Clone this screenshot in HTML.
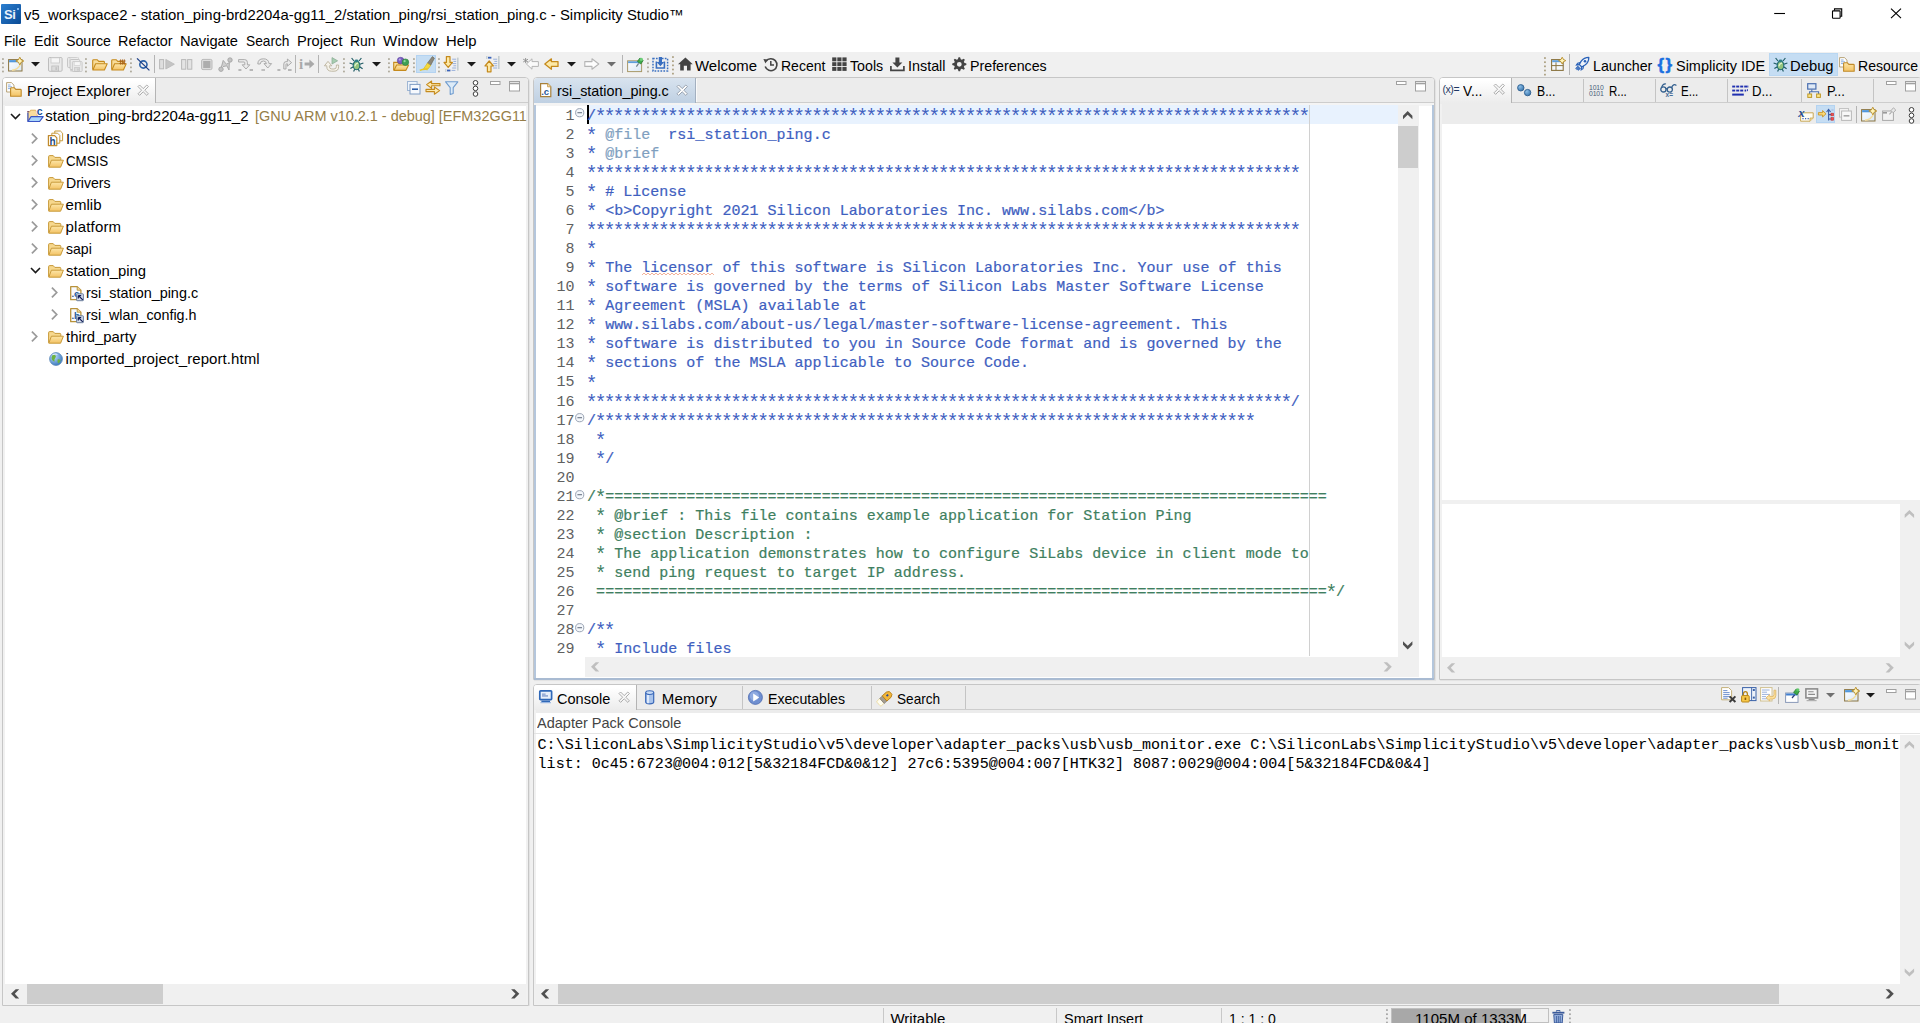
<!DOCTYPE html>
<html lang="en"><head><meta charset="utf-8"><title>Simplicity Studio</title>
<style>
html,body{margin:0;padding:0;}
body{width:1920px;height:1023px;overflow:hidden;background:#f0f0f0;position:relative;font-family:"Liberation Sans",sans-serif;font-size:15px;color:#000;}
div,span,svg{position:absolute;}
span{white-space:pre;line-height:20px;}
.m{font-family:"Liberation Mono",monospace;letter-spacing:0.02px;-webkit-text-stroke:0.22px;}
i{font-style:normal}
svg{overflow:visible}
</style></head>
<body>
<div style="left:0px;top:0px;width:1920px;height:52px;background:#fff;"></div>
<div style="left:2px;top:77px;width:525px;height:927px;border:1px solid #c6c6c6;border-radius:4px 4px 0 0;background:#fff;box-shadow:1px 1px 1px rgba(0,0,0,0.06);overflow:hidden;"><div style="left:0;top:0;width:100%;height:24px;background:#ececec;border-bottom:1px solid #cdcdcd;"></div><div style="left:0;top:25px;width:100%;height:2.5px;background:#ececec;"></div></div>
<div style="left:533px;top:77px;width:900px;height:601px;border:1px solid #c6c6c6;border-radius:4px 4px 0 0;background:#fff;box-shadow:1px 1px 1px rgba(0,0,0,0.06);overflow:hidden;"><div style="left:0;top:0;width:100%;height:24px;background:#ececec;border-bottom:1px solid #cdcdcd;"></div><div style="left:0;top:25px;width:100%;height:2.5px;background:#f4f4f4;"></div></div>
<div style="left:1439px;top:77px;width:481px;height:601px;border:1px solid #c6c6c6;border-radius:4px 4px 0 0;background:#fff;box-shadow:1px 1px 1px rgba(0,0,0,0.06);overflow:hidden;"><div style="left:0;top:0;width:100%;height:24px;background:#ececec;border-bottom:1px solid #cdcdcd;"></div><div style="left:0;top:25px;width:100%;height:2.5px;background:#ececec;"></div></div>
<div style="left:533px;top:684px;width:1387px;height:320px;border:1px solid #c6c6c6;border-radius:4px 4px 0 0;background:#fff;box-shadow:1px 1px 1px rgba(0,0,0,0.06);overflow:hidden;"><div style="left:0;top:0;width:100%;height:24px;background:#ececec;border-bottom:1px solid #cdcdcd;"></div><div style="left:0;top:25px;width:100%;height:2.5px;background:#ececec;"></div></div>
<div style="left:1769px;top:52.6px;width:69px;height:23.2px;background:#c5ddf3;border:1px solid #b9d7f2;box-sizing:border-box;"></div>
<div style="left:3px;top:105px;width:2px;height:900px;background:#f1f1f1;"></div>
<div style="left:525.5px;top:105px;width:2px;height:900px;background:#f1f1f1;"></div>
<div style="left:1440px;top:104px;width:2px;height:575px;background:#f1f1f1;"></div>
<div style="left:534px;top:710px;width:1.6px;height:295px;background:#f1f1f1;"></div>
<div style="left:3px;top:1003.9px;width:524px;height:1.3px;background:#f1f1f1;"></div>
<div style="left:534px;top:1003.9px;width:1386px;height:1.3px;background:#f1f1f1;"></div>
<div style="left:5px;top:983.5px;width:520.5px;height:20.5px;background:#f0f0f0;"></div>
<div style="left:26.8px;top:983.5px;width:136.7px;height:20.5px;background:#cdcdcd;"></div>
<svg style="left:5px;top:983.5px;" width="520.5" height="20.5" viewBox="0 0 520.5 20.5"><polygon points="6.00,9.85 10.70,14.55 14.20,14.55 9.80,9.85 14.20,5.15 10.70,5.15" fill="#505050"/><polygon points="514.30,9.85 509.60,14.55 506.10,14.55 510.50,9.85 506.10,5.15 509.60,5.15" fill="#505050"/></svg>
<div style="left:534px;top:78px;width:161px;height:25px;border-radius:4px 0 0 0;background:linear-gradient(#d8e3ef,#bfd0e2);border-right:1px solid #a3b0c0;"></div>
<div style="left:696px;top:79px;width:1px;height:23px;background:#fafafa;"></div>
<div style="left:534px;top:105px;width:2px;height:573px;background:#b4c6dc;"></div>
<div style="left:1432px;top:105px;width:2px;height:573px;background:#b4c6dc;"></div>
<div style="left:534px;top:677.7px;width:900px;height:2.1px;background:#a9bbd2;"></div>
<div style="left:589px;top:105px;width:809px;height:19px;background:#e8f2fe;"></div>
<div style="left:587px;top:105px;width:2px;height:19px;background:#000;"></div>
<div style="left:1309px;top:105px;width:1px;height:551px;background:#d0d0d0;"></div>
<div style="left:1398px;top:105px;width:20.6px;height:551.5px;background:#f0f0f0;"></div>
<div style="left:1398.3px;top:126px;width:20.0px;height:42px;background:#cdcdcd;"></div>
<svg style="left:1398px;top:105px;" width="20.6" height="551.5" viewBox="0 0 20.6 551.5"><polygon points="9.70,5.90 14.40,10.60 14.40,14.10 9.70,9.70 5.00,14.10 5.00,10.60" fill="#505050"/><polygon points="9.70,544.60 14.40,539.90 14.40,536.40 9.70,540.80 5.00,536.40 5.00,539.90" fill="#505050"/></svg>
<div style="left:585px;top:656.5px;width:813px;height:20.5px;background:#f0f0f0;"></div>
<svg style="left:585px;top:656.5px;" width="813" height="20.5" viewBox="0 0 813 20.5"><polygon points="6.00,9.85 10.70,14.55 14.20,14.55 9.80,9.85 14.20,5.15 10.70,5.15" fill="#bfbfbf"/><polygon points="806.80,9.85 802.10,14.55 798.60,14.55 803.00,9.85 798.60,5.15 802.10,5.15" fill="#bfbfbf"/></svg>
<div style="left:1398px;top:656.5px;width:20.6px;height:20.5px;background:#f0f0f0;"></div>
<div style="left:1441.5px;top:103px;width:479px;height:21px;background:#ececec;"></div>
<div style="left:1440px;top:500px;width:480px;height:4px;background:#f0f0f0;"></div>
<div style="left:1900px;top:504px;width:20px;height:152.5px;background:#f0f0f0;"></div>
<svg style="left:1900px;top:504px;" width="20" height="152.5" viewBox="0 0 20 152.5"><polygon points="9.40,5.90 14.10,10.60 14.10,14.10 9.40,9.70 4.70,14.10 4.70,10.60" fill="#bfbfbf"/><polygon points="9.40,145.60 14.10,140.90 14.10,137.40 9.40,141.80 4.70,137.40 4.70,140.90" fill="#bfbfbf"/></svg>
<div style="left:1441px;top:656.5px;width:459px;height:22.5px;background:#f0f0f0;"></div>
<svg style="left:1441px;top:656.5px;" width="459" height="22.5" viewBox="0 0 459 22.5"><polygon points="6.00,10.85 10.70,15.55 14.20,15.55 9.80,10.85 14.20,6.15 10.70,6.15" fill="#bfbfbf"/><polygon points="452.80,10.85 448.10,15.55 444.60,15.55 449.00,10.85 444.60,6.15 448.10,6.15" fill="#bfbfbf"/></svg>
<div style="left:1900px;top:656px;width:20px;height:23px;background:#f0f0f0;"></div>
<div style="left:1440px;top:78px;width:71px;height:25px;border-radius:3px 0 0 0;background:linear-gradient(#ffffff 10%,#ececec);border-right:1px solid #b4b4b4;"></div>
<div style="left:1583px;top:79px;width:1px;height:23px;background:#c4c4c4;"></div>
<div style="left:1655px;top:79px;width:1px;height:23px;background:#c4c4c4;"></div>
<div style="left:1727px;top:79px;width:1px;height:23px;background:#c4c4c4;"></div>
<div style="left:1801px;top:79px;width:1px;height:23px;background:#c4c4c4;"></div>
<div style="left:1873px;top:79px;width:1px;height:23px;background:#c4c4c4;"></div>
<div style="left:3px;top:78px;width:152px;height:25px;border-radius:3px 0 0 0;background:linear-gradient(#ffffff 10%,#ececec);border-right:1px solid #b4b4b4;"></div>
<div style="left:534px;top:685px;width:102px;height:25px;border-radius:3px 0 0 0;background:linear-gradient(#ffffff 10%,#ececec);border-right:1px solid #b4b4b4;"></div>
<div style="left:742px;top:686px;width:1px;height:23px;background:#c4c4c4;"></div>
<div style="left:871px;top:686px;width:1px;height:23px;background:#c4c4c4;"></div>
<div style="left:965px;top:686px;width:1px;height:23px;background:#c4c4c4;"></div>
<div style="left:534px;top:733px;width:1386px;height:1px;background:#e4e4e4;"></div>
<div style="left:1900px;top:735px;width:20px;height:248.5px;background:#f0f0f0;"></div>
<svg style="left:1900px;top:735px;" width="20" height="248.5" viewBox="0 0 20 248.5"><polygon points="9.40,5.90 14.10,10.60 14.10,14.10 9.40,9.70 4.70,14.10 4.70,10.60" fill="#bfbfbf"/><polygon points="9.40,241.60 14.10,236.90 14.10,233.40 9.40,237.80 4.70,233.40 4.70,236.90" fill="#bfbfbf"/></svg>
<div style="left:535px;top:983.5px;width:1365px;height:20.5px;background:#f0f0f0;"></div>
<div style="left:557.5px;top:983.5px;width:1221.9px;height:20.5px;background:#cdcdcd;"></div>
<svg style="left:535px;top:983.5px;" width="1365" height="20.5" viewBox="0 0 1365 20.5"><polygon points="6.00,9.85 10.70,14.55 14.20,14.55 9.80,9.85 14.20,5.15 10.70,5.15" fill="#505050"/><polygon points="1358.80,9.85 1354.10,14.55 1350.60,14.55 1355.00,9.85 1350.60,5.15 1354.10,5.15" fill="#505050"/></svg>
<div style="left:1900px;top:983.5px;width:20px;height:20.5px;background:#f0f0f0;"></div>
<div style="left:0px;top:1006px;width:1920px;height:17px;background:#f0f0f0;"></div>
<div style="left:883px;top:1008px;width:1px;height:15px;background:#c8c8c8;"></div>
<div style="left:1056px;top:1008px;width:1px;height:15px;background:#c8c8c8;"></div>
<div style="left:1221px;top:1008px;width:1px;height:15px;background:#c8c8c8;"></div>
<div style="left:1391px;top:1008px;width:158px;height:15px;background:#f0f0f0;border:1px solid #c0c0c0;box-sizing:border-box;"></div>
<div style="left:1392px;top:1009px;width:129px;height:14px;background:#a8a8a8;"></div>
<svg width="0" height="0" style="left:0;top:0"><defs>
<linearGradient id="gSi" x1="0" y1="0" x2="1" y2="1"><stop offset="0" stop-color="#2b7fd0"/><stop offset="1" stop-color="#0a4a94"/></linearGradient>
<linearGradient id="gFold" x1="0" y1="0" x2="0" y2="1"><stop offset="0" stop-color="#fde6a8"/><stop offset="1" stop-color="#f3c264"/></linearGradient>
<linearGradient id="gWin" x1="0" y1="0" x2="1" y2="1"><stop offset="0" stop-color="#ffffff"/><stop offset="1" stop-color="#d9e8f6"/></linearGradient>
<linearGradient id="gBlue" x1="0" y1="0" x2="0" y2="1"><stop offset="0" stop-color="#9cc0e8"/><stop offset="1" stop-color="#3f78b8"/></linearGradient>
<radialGradient id="gBall" cx="0.35" cy="0.3" r="0.8"><stop offset="0" stop-color="#8fc0e8"/><stop offset="1" stop-color="#2f6ea8"/></radialGradient>
<radialGradient id="gGlobe" cx="0.35" cy="0.3" r="0.8"><stop offset="0" stop-color="#bfe0ff"/><stop offset="1" stop-color="#2f6fb8"/></radialGradient>
</defs></svg>
<svg style="left:1px;top:4px;" width="20" height="20" viewBox="0 0 20 20"><rect x="0" y="0" width="20" height="20" fill="url(#gSi)" rx="1" /><text x="3" y="15" font-family="Liberation Sans" font-weight="bold" font-size="13" fill="#e9f2fb" letter-spacing="-0.5">Si</text><rect x="16" y="4" width="2" height="2" fill="#7fb6ee" /></svg>
<svg style="left:1770px;top:4px;" width="20" height="20" viewBox="0 0 20 20"><path d="M4.2 9.5 H15" fill="none" stroke="#000" stroke-width="1.1" /></svg>
<svg style="left:1828px;top:4px;" width="20" height="20" viewBox="0 0 20 20"><path d="M6.5 6.5 V4.9 H13.7 V12.2 H12.1" fill="none" stroke="#000" stroke-width="1.1" /><rect x="4.5" y="6.9" width="7.6" height="7.4" fill="none" stroke="#000" stroke-width="1.1" rx="0.6" /></svg>
<svg style="left:1886px;top:4px;" width="20" height="20" viewBox="0 0 20 20"><path d="M5 4.6 L15 14.2 M15 4.6 L5 14.2" fill="none" stroke="#000" stroke-width="1.15" /></svg>
<svg style="left:9.5px;top:113px;" width="11" height="7" viewBox="0 0 11 7"><path d="M1 1 L5.5 5.5 L10 1" fill="none" stroke="#1a1a1a" stroke-width="1.6" /></svg>
<svg style="left:27px;top:108px;" width="17" height="15" viewBox="0 0 17 15"><path d="M1 12.8 V3.8 H2.8 L3.6 2.2 H8.6 L9.4 3.8 H10.2 V8.6 H4 Z" fill="#f9dd9c" stroke="#dcae52" stroke-width="0.9" stroke-linejoin="round"/><path d="M0.9 4.4 V13.5" fill="none" stroke="#3a54c4" stroke-width="1.2" /><path d="M0.2 3.6 H2.2" fill="none" stroke="#7a4a6a" stroke-width="1" /><path d="M1 13.5 L4 8.7 H16.2 L12.6 13.5 Z" fill="#a9d6fb" stroke="#3a54c4" stroke-width="1.2" stroke-linejoin="round"/><text x="9.8" y="6.7" font-family="Liberation Sans" font-weight="bold" font-size="10.5" fill="#1a5596" stroke="#ffffff" stroke-width="1.2" paint-order="stroke">c</text></svg>
<svg style="left:31.4px;top:132.6px;" width="7" height="11" viewBox="0 0 7 11"><path d="M0.9 0.7 L5.7 5.5 L0.9 10.3" fill="none" stroke="#9a9a9a" stroke-width="1.75" /></svg>
<svg style="left:31.4px;top:154.6px;" width="7" height="11" viewBox="0 0 7 11"><path d="M0.9 0.7 L5.7 5.5 L0.9 10.3" fill="none" stroke="#9a9a9a" stroke-width="1.75" /></svg>
<svg style="left:31.4px;top:176.6px;" width="7" height="11" viewBox="0 0 7 11"><path d="M0.9 0.7 L5.7 5.5 L0.9 10.3" fill="none" stroke="#9a9a9a" stroke-width="1.75" /></svg>
<svg style="left:31.4px;top:198.6px;" width="7" height="11" viewBox="0 0 7 11"><path d="M0.9 0.7 L5.7 5.5 L0.9 10.3" fill="none" stroke="#9a9a9a" stroke-width="1.75" /></svg>
<svg style="left:31.4px;top:220.6px;" width="7" height="11" viewBox="0 0 7 11"><path d="M0.9 0.7 L5.7 5.5 L0.9 10.3" fill="none" stroke="#9a9a9a" stroke-width="1.75" /></svg>
<svg style="left:31.4px;top:242.6px;" width="7" height="11" viewBox="0 0 7 11"><path d="M0.9 0.7 L5.7 5.5 L0.9 10.3" fill="none" stroke="#9a9a9a" stroke-width="1.75" /></svg>
<svg style="left:29.5px;top:267px;" width="11" height="7" viewBox="0 0 11 7"><path d="M1 1 L5.5 5.5 L10 1" fill="none" stroke="#1a1a1a" stroke-width="1.6" /></svg>
<svg style="left:51.4px;top:286.6px;" width="7" height="11" viewBox="0 0 7 11"><path d="M0.9 0.7 L5.7 5.5 L0.9 10.3" fill="none" stroke="#9a9a9a" stroke-width="1.75" /></svg>
<svg style="left:51.4px;top:308.6px;" width="7" height="11" viewBox="0 0 7 11"><path d="M0.9 0.7 L5.7 5.5 L0.9 10.3" fill="none" stroke="#9a9a9a" stroke-width="1.75" /></svg>
<svg style="left:31.4px;top:330.6px;" width="7" height="11" viewBox="0 0 7 11"><path d="M0.9 0.7 L5.7 5.5 L0.9 10.3" fill="none" stroke="#9a9a9a" stroke-width="1.75" /></svg>
<svg style="left:47px;top:130px;" width="17" height="17" viewBox="0 0 17 17"><path d="M7.8 1 H13.4 L15.6 3.2 V10.8 H7.8 Z" fill="#fbfcfe" stroke="#c89a3a" stroke-width="1" stroke-linejoin="round"/><path d="M4.8 3.2 H10.6 L12.8 5.4 V13.2 H4.8 Z" fill="#fbfcfe" stroke="#c89a3a" stroke-width="1" stroke-linejoin="round"/><path d="M1.4 5.6 H7.6 L9.8 7.8 V15.6 H1.4 Z" fill="#ffffff" stroke="#c08a2e" stroke-width="1.2" stroke-linejoin="round"/><text x="2.4" y="14.6" font-family="Liberation Sans" font-weight="bold" font-size="10" fill="#1f4a7e">h</text></svg>
<svg style="left:47.5px;top:155.1px;" width="16" height="13" viewBox="0 0 16 13"><path d="M0.6 11.8 V1.6 Q0.6 0.6 1.6 0.6 H5.2 L6.8 2.4 H12 Q12.8 2.4 12.8 3.4 V5" fill="#f7d88e" stroke="#c89a3a" stroke-width="1" /><path d="M0.8 12.2 L3.4 5.2 H15.4 L12.6 12.2 Z" fill="url(#gFold)" stroke="#c89a3a" stroke-width="1" stroke-linejoin="round"/></svg>
<svg style="left:47.5px;top:177.1px;" width="16" height="13" viewBox="0 0 16 13"><path d="M0.6 11.8 V1.6 Q0.6 0.6 1.6 0.6 H5.2 L6.8 2.4 H12 Q12.8 2.4 12.8 3.4 V5" fill="#f7d88e" stroke="#c89a3a" stroke-width="1" /><path d="M0.8 12.2 L3.4 5.2 H15.4 L12.6 12.2 Z" fill="url(#gFold)" stroke="#c89a3a" stroke-width="1" stroke-linejoin="round"/></svg>
<svg style="left:47.5px;top:199.1px;" width="16" height="13" viewBox="0 0 16 13"><path d="M0.6 11.8 V1.6 Q0.6 0.6 1.6 0.6 H5.2 L6.8 2.4 H12 Q12.8 2.4 12.8 3.4 V5" fill="#f7d88e" stroke="#c89a3a" stroke-width="1" /><path d="M0.8 12.2 L3.4 5.2 H15.4 L12.6 12.2 Z" fill="url(#gFold)" stroke="#c89a3a" stroke-width="1" stroke-linejoin="round"/></svg>
<svg style="left:47.5px;top:221.1px;" width="16" height="13" viewBox="0 0 16 13"><path d="M0.6 11.8 V1.6 Q0.6 0.6 1.6 0.6 H5.2 L6.8 2.4 H12 Q12.8 2.4 12.8 3.4 V5" fill="#f7d88e" stroke="#c89a3a" stroke-width="1" /><path d="M0.8 12.2 L3.4 5.2 H15.4 L12.6 12.2 Z" fill="url(#gFold)" stroke="#c89a3a" stroke-width="1" stroke-linejoin="round"/></svg>
<svg style="left:47.5px;top:243.1px;" width="16" height="13" viewBox="0 0 16 13"><path d="M0.6 11.8 V1.6 Q0.6 0.6 1.6 0.6 H5.2 L6.8 2.4 H12 Q12.8 2.4 12.8 3.4 V5" fill="#f7d88e" stroke="#c89a3a" stroke-width="1" /><path d="M0.8 12.2 L3.4 5.2 H15.4 L12.6 12.2 Z" fill="url(#gFold)" stroke="#c89a3a" stroke-width="1" stroke-linejoin="round"/></svg>
<svg style="left:47.5px;top:265.1px;" width="16" height="13" viewBox="0 0 16 13"><path d="M0.6 11.8 V1.6 Q0.6 0.6 1.6 0.6 H5.2 L6.8 2.4 H12 Q12.8 2.4 12.8 3.4 V5" fill="#f7d88e" stroke="#c89a3a" stroke-width="1" /><path d="M0.8 12.2 L3.4 5.2 H15.4 L12.6 12.2 Z" fill="url(#gFold)" stroke="#c89a3a" stroke-width="1" stroke-linejoin="round"/></svg>
<svg style="left:47.5px;top:331.1px;" width="16" height="13" viewBox="0 0 16 13"><path d="M0.6 11.8 V1.6 Q0.6 0.6 1.6 0.6 H5.2 L6.8 2.4 H12 Q12.8 2.4 12.8 3.4 V5" fill="#f7d88e" stroke="#c89a3a" stroke-width="1" /><path d="M0.8 12.2 L3.4 5.2 H15.4 L12.6 12.2 Z" fill="url(#gFold)" stroke="#c89a3a" stroke-width="1" stroke-linejoin="round"/></svg>
<svg style="left:69.5px;top:285.5px;" width="15" height="16" viewBox="0 0 15 16"><path d="M0.7 0.7 H7.2 L10.9 4.2 V13.7 H0.7 Z" fill="#f7faff" stroke="#b8923a" stroke-width="1.3" stroke-linejoin="round"/><path d="M7.2 0.7 V4.2 H10.9" fill="#f3dca0" stroke="#b8923a" stroke-width="0.9" /><text x="1.4" y="11" font-family="Liberation Sans" font-weight="bold" font-size="9.5" fill="#1f5a9a">.c</text><rect x="6.6" y="7.8" width="6.8" height="6.9" fill="#d3dcea" stroke="#5f7494" stroke-width="0.9" rx="0.6" /><path d="M8.4 9.6 L12.8 13.9 M8.3 9.5 V12.4 M8.3 9.5 H11.2" fill="none" stroke="#101a55" stroke-width="1.25" /></svg>
<svg style="left:69.5px;top:307.5px;" width="15" height="16" viewBox="0 0 15 16"><path d="M0.7 0.7 H7.2 L10.9 4.2 V13.7 H0.7 Z" fill="#f7faff" stroke="#b8923a" stroke-width="1.3" stroke-linejoin="round"/><path d="M7.2 0.7 V4.2 H10.9" fill="#f3dca0" stroke="#b8923a" stroke-width="0.9" /><text x="1.4" y="11" font-family="Liberation Sans" font-weight="bold" font-size="9.5" fill="#1f5a9a">.h</text><rect x="6.6" y="7.8" width="6.8" height="6.9" fill="#d3dcea" stroke="#5f7494" stroke-width="0.9" rx="0.6" /><path d="M8.4 9.6 L12.8 13.9 M8.3 9.5 V12.4 M8.3 9.5 H11.2" fill="none" stroke="#101a55" stroke-width="1.25" /></svg>
<svg style="left:48.5px;top:352px;" width="14" height="14" viewBox="0 0 14 14"><circle cx="7" cy="7" r="6.4" fill="url(#gGlobe)" stroke="#5b86b8" stroke-width="0.8"/><path d="M3.2 3.4 Q5 2.2 6.4 3.2 Q7.6 4.6 6.2 6 Q4.8 7.6 5.6 9.4 Q4.2 9.6 3.2 8 Q2 5.6 3.2 3.4 Z M8.6 7.4 Q10.6 6.8 11.6 8.6 Q11 10.8 9.2 11.4 Q8.2 9.6 8.6 7.4 Z" fill="#6db33f" /><path d="M3.6 2.8 Q6 1.4 8.4 2.4" fill="none" stroke="#ffffff" stroke-width="1.1" opacity="0.7"/></svg>
<svg style="left:1.5px;top:58px;" width="2" height="18" viewBox="0 0 2 18"><rect x="0.1" y="0.2" width="1.7" height="1.7" fill="#aaa596" /><rect x="0.1" y="4.3500000000000005" width="1.7" height="1.7" fill="#aaa596" /><rect x="0.1" y="8.5" width="1.7" height="1.7" fill="#aaa596" /><rect x="0.1" y="12.65" width="1.7" height="1.7" fill="#aaa596" /></svg>
<svg style="left:7.8px;top:56.6px;" width="16" height="15" viewBox="0 0 16 15"><rect x="0.6" y="2.6" width="13.4" height="11.4" fill="url(#gWin)" stroke="#8a7440" stroke-width="1" /><rect x="1.1" y="3.1" width="12.4" height="2.2" fill="#4f97dd" /><path d="M4 13.2 Q10 13 12.6 7" fill="none" stroke="#f3dc9a" stroke-width="1.4" /><path d="M11.8 0.2 L13.2 2.8 L15.8 4 L13.2 5.2 L11.8 7.8 L10.4 5.2 L7.8 4 L10.4 2.8 Z" fill="#fff4b8" stroke="#b58a26" stroke-width="0.9" /></svg>
<svg style="left:30.5px;top:62px;" width="9" height="5" viewBox="0 0 9 5"><path d="M0 0 H9 L4.5 4.6 Z" fill="#1a1a1a" /></svg>
<svg style="left:48px;top:57.4px;" width="15" height="15" viewBox="0 0 15 15"><g transform="translate(0 0)"><rect x="0.5" y="0.5" width="13.6" height="13.8" fill="#e9e9e9" stroke="#bdbdbd" stroke-width="1" rx="1.2" /><rect x="3" y="0.8" width="8.4" height="5.2" fill="#f6f6f6" stroke="#c9c9c9" stroke-width="0.8" /><rect x="3.8" y="9" width="6.8" height="5" fill="#dcdcdc" stroke="#bdbdbd" stroke-width="0.8" /><rect x="7.4" y="10.2" width="1.8" height="2.8" fill="#c4c4c4" /></g></svg>
<svg style="left:67px;top:57.2px;" width="16" height="15" viewBox="0 0 16 15"><g opacity="0.8"><g transform="translate(0 0)"><rect x="0.5" y="0.5" width="9.6" height="10" fill="#e9e9e9" stroke="#bdbdbd" stroke-width="1" rx="1.2" /><rect x="3" y="0.8" width="8.4" height="5.2" fill="#f6f6f6" stroke="#c9c9c9" stroke-width="0.8" /><rect x="3.8" y="9" width="6.8" height="5" fill="#dcdcdc" stroke="#bdbdbd" stroke-width="0.8" /><rect x="7.4" y="10.2" width="1.8" height="2.8" fill="#c4c4c4" /></g></g><g transform="translate(2.6 2)"><rect x="0.5" y="0.5" width="9.6" height="10" fill="#ececec" stroke="#c4c4c4" stroke-width="1" rx="1" /></g><g transform="translate(5 4.2) scale(0.72)"><g transform="translate(0 0)"><rect x="0.5" y="0.5" width="13.6" height="13.8" fill="#e9e9e9" stroke="#bdbdbd" stroke-width="1" rx="1.2" /><rect x="3" y="0.8" width="8.4" height="5.2" fill="#f6f6f6" stroke="#c9c9c9" stroke-width="0.8" /><rect x="3.8" y="9" width="6.8" height="5" fill="#dcdcdc" stroke="#bdbdbd" stroke-width="0.8" /><rect x="7.4" y="10.2" width="1.8" height="2.8" fill="#c4c4c4" /></g></g></svg>
<svg style="left:85.3px;top:58px;" width="2" height="18" viewBox="0 0 2 18"><rect x="0.1" y="0.2" width="1.7" height="1.7" fill="#aaa596" /><rect x="0.1" y="4.3500000000000005" width="1.7" height="1.7" fill="#aaa596" /><rect x="0.1" y="8.5" width="1.7" height="1.7" fill="#aaa596" /><rect x="0.1" y="12.65" width="1.7" height="1.7" fill="#aaa596" /></svg>
<svg style="left:91.6px;top:58.6px;" width="16" height="12" viewBox="0 0 16 12"><path d="M0.7 10.6 V1.6 Q0.7 0.7 1.7 0.7 H5.2 L6.8 2.4 H11.6 Q12.4 2.4 12.4 3.2 V4.6" fill="#f8dc98" stroke="#c58a1c" stroke-width="1.1" /><path d="M0.9 11 L3.6 4.8 H15.2 L12.4 11 Z" fill="url(#gFold)" stroke="#c58a1c" stroke-width="1.1" stroke-linejoin="round"/></svg>
<svg style="left:111.2px;top:58.6px;" width="16" height="12" viewBox="0 0 16 12"><path d="M0.7 10.6 V1.6 Q0.7 0.7 1.7 0.7 H5.2 L6.8 2.4 H11.6 Q12.4 2.4 12.4 3.2 V4.6" fill="#f8dc98" stroke="#c58a1c" stroke-width="1.1" /><path d="M0.9 11 L3.6 4.8 H15.2 L12.4 11 Z" fill="url(#gFold)" stroke="#c58a1c" stroke-width="1.1" stroke-linejoin="round"/><path d="M8.4 2 H14.6 M8.4 4.4 H14.6 M9.6 0.4 V5.6 M11.6 0.4 V5.6 M13.4 0.4 V5.6" fill="none" stroke="#a8621a" stroke-width="0.9" /></svg>
<svg style="left:129.6px;top:58px;" width="2" height="18" viewBox="0 0 2 18"><rect x="0.1" y="0.2" width="1.7" height="1.7" fill="#aaa596" /><rect x="0.1" y="4.3500000000000005" width="1.7" height="1.7" fill="#aaa596" /><rect x="0.1" y="8.5" width="1.7" height="1.7" fill="#aaa596" /><rect x="0.1" y="12.65" width="1.7" height="1.7" fill="#aaa596" /></svg>
<svg style="left:136px;top:57px;" width="15" height="15" viewBox="0 0 15 15"><circle cx="7.4" cy="7.5" r="3.6" fill="none" stroke="#2c62a8" stroke-width="1.6"/><path d="M1 1.4 L13.4 13.4" fill="none" stroke="#1d3f86" stroke-width="1.3" /></svg>
<div style="left:154px;top:55px;width:1px;height:18px;background:#b4b4b4;"></div>
<svg style="left:159px;top:59px;" width="17" height="11" viewBox="0 0 17 11"><rect x="0.6" y="0.6" width="4" height="9.2" fill="#dedede" stroke="#b9b9b9" stroke-width="1" /><path d="M6.8 0.4 L15.4 5.2 L6.8 10 Z" fill="#c4c4c4" stroke="#b9b9b9" stroke-width="0.8" /></svg>
<svg style="left:180.6px;top:59px;" width="12" height="11" viewBox="0 0 12 11"><rect x="0.6" y="0.6" width="4.2" height="9.6" fill="#e4e4e4" stroke="#b9b9b9" stroke-width="1" /><rect x="6.6" y="0.6" width="4.2" height="9.6" fill="#e4e4e4" stroke="#b9b9b9" stroke-width="1" /></svg>
<svg style="left:200.6px;top:59px;" width="12" height="11" viewBox="0 0 12 11"><rect x="0.6" y="0.4" width="10.4" height="10.2" fill="#dcdcdc" stroke="#b9b9b9" stroke-width="1" rx="1.4" /><rect x="2.2" y="2" width="7.2" height="7" fill="#adadad" /></svg>
<svg style="left:217.6px;top:57px;" width="16" height="16" viewBox="0 0 16 16"><circle cx="3" cy="12.2" r="2.2" fill="#c4c4c4" stroke="#a4a4a4" stroke-width="0.9"/><circle cx="12" cy="3" r="2.2" fill="#c4c4c4" stroke="#a4a4a4" stroke-width="0.9"/><path d="M3.4 10 L5.2 3.4 L8.4 7.2 L11.4 5.6 L11 13 L8.8 8.8 L5 9.6" fill="#cfcfcf" stroke="#a4a4a4" stroke-width="0.9" /></svg>
<svg style="left:238px;top:58px;" width="16" height="13" viewBox="0 0 16 13"><path d="M0.6 1.6 H6.6 Q9.4 1.6 9.4 4.4 V6.8 H11.8 L8 11 L4.2 6.8 H6.8 V4.8 Q6.8 4 6 4 H0.6 Z" fill="#ececec" stroke="#a4a4a4" stroke-width="0.9" stroke-linejoin="round"/><path d="M0.4 12 H3.4 M11.6 12 H15" fill="none" stroke="#a4a4a4" stroke-width="1.3" /></svg>
<svg style="left:257px;top:58px;" width="17" height="13" viewBox="0 0 17 13"><path d="M0.8 6 Q0.8 0.8 6.4 0.8 Q11.6 0.8 12 5.6 H14.6 L10.8 10 L7 5.6 H9.4 Q9 3 6.4 3 Q3.4 3 3.2 6 Z" fill="#eaeaea" stroke="#a4a4a4" stroke-width="0.9" /><path d="M4.4 12 H8" fill="none" stroke="#a4a4a4" stroke-width="1.3" /></svg>
<svg style="left:276.6px;top:58px;" width="16" height="13" viewBox="0 0 16 13"><path d="M6.8 11 V6 Q6.8 3.6 9.2 3.6 H10.4 V1 L14.6 4.6 L10.4 8.2 V5.8 H9.6 Q9 5.8 9 6.6 V11 Z" fill="#eaeaea" stroke="#a4a4a4" stroke-width="0.9" /><path d="M0.4 12 H3.4 M11 12 H14.6" fill="none" stroke="#a4a4a4" stroke-width="1.3" /></svg>
<div style="left:295px;top:55px;width:1px;height:18px;background:#b4b4b4;"></div>
<svg style="left:299px;top:57.6px;" width="16" height="12" viewBox="0 0 16 12"><text x="0" y="11" font-family="Liberation Serif" font-weight="bold" font-size="15" fill="#a9a9a9">i</text><path d="M5.6 4.6 H10.4 V1.6 L15.4 6 L10.4 10.4 V7.4 H5.6 Z" fill="#a9a9a9" /></svg>
<div style="left:318px;top:55px;width:1px;height:18px;background:#b4b4b4;"></div>
<svg style="left:324px;top:57px;" width="16" height="15" viewBox="0 0 16 15"><path d="M8 0.6 L13.6 3.8 L8 7 Z" fill="#a6cdb0" stroke="#8fae98" stroke-width="0.8" stroke-linejoin="round"/><path d="M4 4.4 L7.8 8.8 H5.4 V9.6 Q5.4 12 7.8 12 H10 Q12.4 12 12.4 9.6 V8 H14.6 V9.8 Q14.6 14.2 10 14.2 H7.6 Q2.8 14.2 2.8 9.6 V8.8 H0.4 Z" fill="#f6f3ea" stroke="#b9b19c" stroke-width="0.9" stroke-linejoin="round"/></svg>
<svg style="left:342.8px;top:58px;" width="2" height="18" viewBox="0 0 2 18"><rect x="0.1" y="0.2" width="1.7" height="1.7" fill="#aaa596" /><rect x="0.1" y="4.3500000000000005" width="1.7" height="1.7" fill="#aaa596" /><rect x="0.1" y="8.5" width="1.7" height="1.7" fill="#aaa596" /><rect x="0.1" y="12.65" width="1.7" height="1.7" fill="#aaa596" /></svg>
<svg style="left:349px;top:57px;" width="15" height="15" viewBox="0 0 15 15"><path d="M5 4 L2.6 1 M10 4 L12.4 1 M4.2 7.2 L0.6 6 M10.8 7.2 L14.4 6 M4.4 9.8 L1.4 11.6 M10.6 9.8 L13.6 11.8 M5.8 12 L4.6 14.6 M9.2 12 L10.4 14.6" fill="none" stroke="#1e5a63" stroke-width="1.15" /><ellipse cx="7.5" cy="8.4" rx="3.3" ry="4.3" fill="#93c47d" stroke="#1e6a74" stroke-width="1.1"/><ellipse cx="7.5" cy="4" rx="2" ry="1.4" fill="#2f7f86"/><path d="M5.8 9.4 Q6.6 6.4 9 6.2" fill="none" stroke="#dff2d0" stroke-width="1.2" /></svg>
<svg style="left:371.6px;top:62px;" width="9" height="5" viewBox="0 0 9 5"><path d="M0 0 H9 L4.5 4.6 Z" fill="#1a1a1a" /></svg>
<svg style="left:387.8px;top:58px;" width="2" height="18" viewBox="0 0 2 18"><rect x="0.1" y="0.2" width="1.7" height="1.7" fill="#aaa596" /><rect x="0.1" y="4.3500000000000005" width="1.7" height="1.7" fill="#aaa596" /><rect x="0.1" y="8.5" width="1.7" height="1.7" fill="#aaa596" /><rect x="0.1" y="12.65" width="1.7" height="1.7" fill="#aaa596" /></svg>
<svg style="left:393px;top:57px;" width="17" height="14" viewBox="0 0 17 14"><path d="M0.7 13 V5.4 H4.6 L6 6.8 H9" fill="#f8dc98" stroke="#c58a1c" stroke-width="1.1" /><path d="M0.9 13.4 L3.6 8 H15.6 L12.8 13.4 Z" fill="url(#gFold)" stroke="#c58a1c" stroke-width="1.1" stroke-linejoin="round"/><circle cx="7.6" cy="3.6" r="3.3" fill="#7a5fc0" stroke="#5a3fa0" stroke-width="0.6"/><circle cx="12.4" cy="5.2" r="3.3" fill="#3fa055" stroke="#2a7a3c" stroke-width="0.6"/><circle cx="6.8" cy="2.6" r="1.1" fill="#b9a6ea"/><circle cx="11.6" cy="4.2" r="1.1" fill="#8fd89f"/></svg>
<svg style="left:413.2px;top:58px;" width="2" height="18" viewBox="0 0 2 18"><rect x="0.1" y="0.2" width="1.7" height="1.7" fill="#aaa596" /><rect x="0.1" y="4.3500000000000005" width="1.7" height="1.7" fill="#aaa596" /><rect x="0.1" y="8.5" width="1.7" height="1.7" fill="#aaa596" /><rect x="0.1" y="12.65" width="1.7" height="1.7" fill="#aaa596" /></svg>
<div style="left:416px;top:54.5px;width:20px;height:18.5px;background:#c5ddf3;border:1px solid #b4d3f1;box-sizing:border-box;"></div>
<svg style="left:419px;top:56px;" width="16" height="16" viewBox="0 0 16 16"><path d="M13.4 0.6 L15.4 2.2 L11.6 9.4 L8.4 7.2 Z" fill="#8c8778" stroke="#6f6a5c" stroke-width="0.7" /><path d="M8.4 7.2 L11.6 9.4 L9.4 12.6 L4.2 13.4 Z" fill="#f4d83a" stroke="#d8b820" stroke-width="0.7" /><path d="M0.8 14.4 Q4 12.8 8.8 13.4" fill="none" stroke="#e8c828" stroke-width="1.6" /></svg>
<svg style="left:438.4px;top:58px;" width="2" height="18" viewBox="0 0 2 18"><rect x="0.1" y="0.2" width="1.7" height="1.7" fill="#aaa596" /><rect x="0.1" y="4.3500000000000005" width="1.7" height="1.7" fill="#aaa596" /><rect x="0.1" y="8.5" width="1.7" height="1.7" fill="#aaa596" /><rect x="0.1" y="12.65" width="1.7" height="1.7" fill="#aaa596" /></svg>
<svg style="left:444.4px;top:55.8px;" width="15" height="17" viewBox="0 0 15 17"><path d="M8.2 3.2 H12.2" fill="none" stroke="#8fa8d8" stroke-width="0.9" /><path d="M9.399999999999999 5.4 H12.2" fill="none" stroke="#8fa8d8" stroke-width="0.9" /><path d="M8.2 7.6000000000000005 H12.2" fill="none" stroke="#8fa8d8" stroke-width="0.9" /><path d="M9.399999999999999 9.8 H12.2" fill="none" stroke="#8fa8d8" stroke-width="0.9" /><path d="M8.2 12.0 H12.2" fill="none" stroke="#8fa8d8" stroke-width="0.9" /><rect x="13" y="1.6" width="1.6" height="13" fill="#c3ccd0" /><path d="M2.4 0.6 H6 V6.4 H8.4 L4.2 11.4 L0 6.4 H2.4 Z" fill="#fde9a6" stroke="#c58a1c" stroke-width="1.2" stroke-linejoin="round"/><rect x="1.2" y="13" width="1.2" height="3" fill="#c3ccd0" /><rect x="3" y="13.6" width="3.4" height="1.8" fill="#3a62b8" /><path d="M7.6 14.4 H11.4" fill="none" stroke="#8fa8d8" stroke-width="0.9" /></svg>
<svg style="left:467px;top:62px;" width="9" height="5" viewBox="0 0 9 5"><path d="M0 0 H9 L4.5 4.6 Z" fill="#1a1a1a" /></svg>
<svg style="left:484.6px;top:55.8px;" width="15" height="17" viewBox="0 0 15 17"><path d="M8.2 3.2 H12.2" fill="none" stroke="#8fa8d8" stroke-width="0.9" /><path d="M9.399999999999999 5.4 H12.2" fill="none" stroke="#8fa8d8" stroke-width="0.9" /><path d="M8.2 7.6000000000000005 H12.2" fill="none" stroke="#8fa8d8" stroke-width="0.9" /><path d="M9.399999999999999 9.8 H12.2" fill="none" stroke="#8fa8d8" stroke-width="0.9" /><path d="M8.2 12.0 H12.2" fill="none" stroke="#8fa8d8" stroke-width="0.9" /><rect x="13" y="0" width="1.6" height="13" fill="#c3ccd0" /><path d="M2.4 15.8 H6 V10 H8.4 L4.2 5 L0 10 H2.4 Z" fill="#fde9a6" stroke="#c58a1c" stroke-width="1.2" stroke-linejoin="round"/><rect x="1.2" y="0" width="1.2" height="3" fill="#c3ccd0" /><rect x="3" y="0.8" width="3.4" height="1.8" fill="#3a62b8" /></svg>
<svg style="left:507px;top:62px;" width="9" height="5" viewBox="0 0 9 5"><path d="M0 0 H9 L4.5 4.6 Z" fill="#1a1a1a" /></svg>
<svg style="left:523px;top:57.6px;" width="17" height="13" viewBox="0 0 17 13"><path d="M15.4 3.6 H9 V0.8 L3.4 6 L9 11.2 V8.4 H15.4 Z" fill="#fafafa" stroke="#b4b4b4" stroke-width="1" stroke-linejoin="round"/><path d="M2.6 0 V5.2 M0.2 1.2 L5 4 M5 1.2 L0.2 4" fill="none" stroke="#8c8c8c" stroke-width="0.9" /></svg>
<svg style="left:544px;top:57.8px;" width="15" height="13" viewBox="0 0 15 13"><path d="M14 3.6 H7.4 V0.8 L0.8 6 L7.4 11.2 V8.4 H14 Z" fill="#fde9a6" stroke="#c58a1c" stroke-width="1.3" stroke-linejoin="round"/></svg>
<svg style="left:566.8px;top:62px;" width="9" height="5" viewBox="0 0 9 5"><path d="M0 0 H9 L4.5 4.6 Z" fill="#1a1a1a" /></svg>
<svg style="left:584px;top:57.8px;" width="16" height="13" viewBox="0 0 16 13"><path d="M0.8 3.6 H8 V0.8 L14.8 6 L8 11.2 V8.4 H0.8 Z" fill="#fdfdfd" stroke="#b4b4b4" stroke-width="1.1" stroke-linejoin="round"/></svg>
<svg style="left:607px;top:62px;" width="9" height="5" viewBox="0 0 9 5"><path d="M0 0 H9 L4.5 4.6 Z" fill="#6e6e6e" /></svg>
<div style="left:622px;top:55px;width:1px;height:18px;background:#b4b4b4;"></div>
<svg style="left:626.6px;top:57px;" width="17" height="15" viewBox="0 0 17 15"><rect x="0.6" y="3.8" width="14" height="10.8" fill="url(#gWin)" stroke="#a89868" stroke-width="1" /><rect x="1.1" y="4.3" width="13" height="1.8" fill="#5f9fdc" /><path d="M9.4 9.6 L11.6 6.4" fill="none" stroke="#6f7f88" stroke-width="1.2" /><path d="M10.4 4.4 L13 1 L16.2 3.4 L13.8 7 Z" fill="#3faa4a" stroke="#2a7a32" stroke-width="0.8" /><circle cx="14.4" cy="2.4" r="1.6" fill="#6fd07a"/></svg>
<svg style="left:646.8px;top:58px;" width="2" height="18" viewBox="0 0 2 18"><rect x="0.1" y="0.2" width="1.7" height="1.7" fill="#aaa596" /><rect x="0.1" y="4.3500000000000005" width="1.7" height="1.7" fill="#aaa596" /><rect x="0.1" y="8.5" width="1.7" height="1.7" fill="#aaa596" /><rect x="0.1" y="12.65" width="1.7" height="1.7" fill="#aaa596" /></svg>
<svg style="left:651.6px;top:57.4px;" width="17" height="15" viewBox="0 0 17 15"><rect x="1" y="1.6" width="14.6" height="12.4" fill="none" stroke="#3a6fc0" stroke-width="1.5" stroke-dasharray="1.7 1.25"/><path d="M4.4 4.6 V11 H12.4 V4.6" fill="none" stroke="#3a6fc0" stroke-width="1.6" /><path d="M6.8 0 H10 V5 H12.2 L8.4 9.2 L4.6 5 H6.8 Z" fill="#3a6fc0" /></svg>
<svg style="left:671.8px;top:56px;" width="2" height="18" viewBox="0 0 2 18"><rect x="0.1" y="0.2" width="1.7" height="1.7" fill="#a89c7c" /><rect x="0.1" y="4.3500000000000005" width="1.7" height="1.7" fill="#a89c7c" /><rect x="0.1" y="8.5" width="1.7" height="1.7" fill="#a89c7c" /><rect x="0.1" y="12.65" width="1.7" height="1.7" fill="#a89c7c" /><rect x="0.1" y="16.8" width="1.7" height="1.7" fill="#a89c7c" /></svg>
<svg style="left:677.6px;top:57px;" width="15" height="14" viewBox="0 0 15 14"><path d="M7.4 0.4 L14.8 7.2 H12.6 V13.6 H9 V8.8 H5.8 V13.6 H2.2 V7.2 H0 Z" fill="#444444" /></svg>
<svg style="left:763px;top:57px;" width="15" height="15" viewBox="0 0 15 15"><path d="M3 4.2 A6 6 0 1 1 2.2 9.6" fill="none" stroke="#444444" stroke-width="1.6" /><path d="M0.4 2 L4.8 2.6 L2.4 6.6 Z" fill="#444444" /><path d="M7.8 4 V8 H11" fill="none" stroke="#444444" stroke-width="1.5" /></svg>
<svg style="left:832px;top:57px;" width="15" height="15" viewBox="0 0 15 15"><rect x="0.2" y="0.4" width="4.2" height="3.9" fill="#444444" /><rect x="0.2" y="5.2" width="4.2" height="3.9" fill="#444444" /><rect x="0.2" y="10.0" width="4.2" height="3.9" fill="#444444" /><rect x="5.3" y="0.4" width="4.2" height="3.9" fill="#444444" /><rect x="5.3" y="5.2" width="4.2" height="3.9" fill="#444444" /><rect x="5.3" y="10.0" width="4.2" height="3.9" fill="#444444" /><rect x="10.399999999999999" y="0.4" width="4.2" height="3.9" fill="#444444" /><rect x="10.399999999999999" y="5.2" width="4.2" height="3.9" fill="#444444" /><rect x="10.399999999999999" y="10.0" width="4.2" height="3.9" fill="#444444" /></svg>
<svg style="left:890px;top:57px;" width="15" height="15" viewBox="0 0 15 15"><path d="M5.4 0.4 H9.4 V5.4 H12.4 L7.4 10.4 L2.4 5.4 H5.4 Z" fill="#444444" /><path d="M0.9 9 V13.4 H13.9 V9" fill="none" stroke="#444444" stroke-width="1.7" /></svg>
<svg style="left:952.4px;top:57px;" width="15" height="15" viewBox="0 0 15 15"><path d="M14.36 6.53 L14.36 8.07 L12.29 8.76 L11.86 9.80 L12.83 11.75 L11.75 12.83 L9.80 11.86 L8.76 12.29 L8.07 14.36 L6.53 14.36 L5.84 12.29 L4.80 11.86 L2.85 12.83 L1.77 11.75 L2.74 9.80 L2.31 8.76 L0.24 8.07 L0.24 6.53 L2.31 5.84 L2.74 4.80 L1.77 2.85 L2.85 1.77 L4.80 2.74 L5.84 2.31 L6.53 0.24 L8.07 0.24 L8.76 2.31 L9.80 2.74 L11.75 1.77 L12.83 2.85 L11.86 4.80 L12.29 5.84 Z M9.7 7.3 A2.4 2.4 0 1 0 4.9 7.3 A2.4 2.4 0 1 0 9.7 7.3 Z" fill="#444444" fill-rule="evenodd"/></svg>
<svg style="left:1544.2px;top:56.6px;" width="2" height="18" viewBox="0 0 2 18"><rect x="0.1" y="0.2" width="1.7" height="1.7" fill="#a89c7c" /><rect x="0.1" y="4.3500000000000005" width="1.7" height="1.7" fill="#a89c7c" /><rect x="0.1" y="8.5" width="1.7" height="1.7" fill="#a89c7c" /><rect x="0.1" y="12.65" width="1.7" height="1.7" fill="#a89c7c" /><rect x="0.1" y="16.8" width="1.7" height="1.7" fill="#a89c7c" /></svg>
<svg style="left:1551px;top:57px;" width="15" height="14" viewBox="0 0 15 14"><rect x="0.6" y="2.6" width="11.6" height="10.8" fill="#f4f8fc" stroke="#8a7440" stroke-width="1.1" /><rect x="1.2" y="3.2" width="10.4" height="2" fill="#5f9fdc" /><path d="M0.6 8.6 H12.2 M5 5.4 V13.4" fill="none" stroke="#8a7440" stroke-width="1" /><path d="M11.2 0.2 L12.4 2.4 L14.8 3.6 L12.4 4.8 L11.2 7 L10 4.8 L7.6 3.6 L10 2.4 Z" fill="#fff4b8" stroke="#b58a26" stroke-width="0.9" /></svg>
<div style="left:1569px;top:54px;width:1px;height:21px;background:#b4b4b4;"></div>
<svg style="left:1574.6px;top:57px;" width="15" height="14" viewBox="0 0 15 14"><path d="M13.8 0.4 Q9 0.4 6.2 4.2 L4.2 7.4 L6.8 10 L10 8 Q13.8 5.2 13.8 0.4 Z" fill="#eef3fb" stroke="#2a62b8" stroke-width="1.3" stroke-linejoin="round"/><circle cx="10" cy="4.2" r="1.3" fill="#2a62b8"/><path d="M5.4 5.6 L2.6 6.2 L1.4 8 L4.2 7.6 M8.6 8.8 L8 11.6 L6.2 12.8 L6.6 10 M3.4 9 L0.6 11.8 M4.4 10 L1.6 12.8 M5.4 11 L3 13.4" fill="none" stroke="#2a62b8" stroke-width="1.1" /></svg>
<svg style="left:1658px;top:55.5px;" width="15" height="18" viewBox="0 0 15 18"><text x="-0.6" y="13.8" font-family="Liberation Sans" font-weight="bold" font-size="17" fill="#1a6fe0" stroke="#1a6fe0" stroke-width="0.5" letter-spacing="1.4">{}</text></svg>
<svg style="left:1772.6px;top:57.4px;" width="15" height="15" viewBox="0 0 15 15"><path d="M5 4 L2.6 1 M10 4 L12.4 1 M4.2 7.2 L0.6 6 M10.8 7.2 L14.4 6 M4.4 9.8 L1.4 11.6 M10.6 9.8 L13.6 11.8 M5.8 12 L4.6 14.6 M9.2 12 L10.4 14.6" fill="none" stroke="#1e5a63" stroke-width="1.15" /><ellipse cx="7.5" cy="8.4" rx="3.3" ry="4.3" fill="#93c47d" stroke="#1e6a74" stroke-width="1.1"/><ellipse cx="7.5" cy="4" rx="2" ry="1.4" fill="#2f7f86"/><path d="M5.8 9.4 Q6.6 6.4 9 6.2" fill="none" stroke="#dff2d0" stroke-width="1.2" /></svg>
<svg style="left:1839.4px;top:57px;" width="16" height="15" viewBox="0 0 16 15"><path d="M0.6 0.6 H5.4 L8 3.2 V10 H0.6 Z" fill="#fff" stroke="#b09a6a" stroke-width="0.9" /><path d="M2 3 H4.6 M2 4.8 H6 M2 6.6 H6" fill="none" stroke="#6f9ad8" stroke-width="0.8" /><path d="M4.6 14.2 V6.6 Q4.6 5.8 5.4 5.8 H8.4 L9.8 7.4 H14.4 Q15.2 7.4 15.2 8.2 V14.2 Z" fill="url(#gFold)" stroke="#c08a2a" stroke-width="1.1" stroke-linejoin="round"/></svg>
<svg style="left:6.2px;top:82px;" width="16" height="15" viewBox="0 0 16 15"><path d="M0.6 0.6 H5.4 L8 3.2 V10 H0.6 Z" fill="#fff" stroke="#b09a6a" stroke-width="0.9" /><path d="M2 3 H4.6 M2 4.8 H6 M2 6.6 H6" fill="none" stroke="#6f9ad8" stroke-width="0.8" /><path d="M4.6 14.2 V6.6 Q4.6 5.8 5.4 5.8 H8.4 L9.8 7.4 H14.4 Q15.2 7.4 15.2 8.2 V14.2 Z" fill="url(#gFold)" stroke="#c08a2a" stroke-width="1.1" stroke-linejoin="round"/></svg>
<svg style="left:137.6px;top:84.5px;" width="11" height="11" viewBox="0 0 11 11"><path d="M0 1.6 L1.6 0 L5.2 3.6 L8.8 0 L10.4 1.6 L6.8 5.2 L10.4 8.8 L8.8 10.4 L5.2 6.8 L1.6 10.4 L0 8.8 L3.6 5.2 Z" fill="none" stroke="#a4a4a4" stroke-width="0.9" stroke-linejoin="round"/></svg>
<svg style="left:407px;top:80.6px;" width="14" height="14" viewBox="0 0 14 14"><rect x="0.5" y="0.5" width="9.6" height="9" fill="#eef4fb" stroke="#9fb6d4" stroke-width="1" /><rect x="3" y="3.4" width="10" height="9.6" fill="#f6f9fd" stroke="#7f9cc4" stroke-width="1" /><path d="M5 8.2 H11" fill="none" stroke="#2a5ca8" stroke-width="1.6" /></svg>
<svg style="left:425px;top:79.4px;" width="16" height="16" viewBox="0 0 16 16"><path d="M15 4.6 H6.6 V2 L1.6 5.6 L6.6 9.2 V6.8 H15 Z M1 10.4 H9.4 V8 L14.6 11.6 L9.4 15.2 V12.6 H1 Z" fill="#fdeab0" stroke="#c58a1c" stroke-width="1.1" stroke-linejoin="round"/></svg>
<svg style="left:445px;top:80.6px;" width="14" height="14" viewBox="0 0 14 14"><path d="M0.6 0.8 H12.8 L8.2 6.6 V12.4 L5.2 13.4 V6.6 Z" fill="#dcebf8" stroke="#6f9ccf" stroke-width="1.1" stroke-linejoin="round"/></svg>
<svg style="left:472px;top:79.8px;" width="7" height="18" viewBox="0 0 7 18"><circle cx="3.5" cy="2.8" r="2.3" fill="#fff" stroke="#3c3c3c" stroke-width="1"/><circle cx="3.5" cy="8.399999999999999" r="2.3" fill="#fff" stroke="#3c3c3c" stroke-width="1"/><circle cx="3.5" cy="14.0" r="2.3" fill="#fff" stroke="#3c3c3c" stroke-width="1"/></svg>
<svg style="left:490px;top:81px;" width="30" height="12" viewBox="0 0 30 12"><rect x="0.5" y="0.5" width="9.5" height="3" fill="#fff" stroke="#a0a0a0" stroke-width="1" /><rect x="19.5" y="0.5" width="10" height="9.5" fill="#fff" stroke="#a0a0a0" stroke-width="1" /><path d="M19.5 2.5 H29.5" fill="none" stroke="#a0a0a0" stroke-width="1.6" /></svg>
<svg style="left:540px;top:82.6px;" width="12" height="15" viewBox="0 0 12 15"><path d="M0.6 0.6 H7.6 L10.8 3.8 V13.6 H0.6 Z" fill="#fff" stroke="#a8803a" stroke-width="1.2" /><path d="M7.6 0.6 V3.8 H10.8" fill="#f6e2b4" stroke="#c89a4a" stroke-width="0.9" /><text x="1.2" y="11.6" font-family="Liberation Sans" font-weight="bold" font-size="9.5" fill="#1f5a9a">.c</text></svg>
<svg style="left:677.2px;top:84.8px;" width="11" height="11" viewBox="0 0 11 11"><path d="M0 1.6 L1.6 0 L5.2 3.6 L8.8 0 L10.4 1.6 L6.8 5.2 L10.4 8.8 L8.8 10.4 L5.2 6.8 L1.6 10.4 L0 8.8 L3.6 5.2 Z" fill="#fff" stroke="#8e98a6" stroke-width="0.9" stroke-linejoin="round"/></svg>
<svg style="left:1396px;top:81.4px;" width="30" height="12" viewBox="0 0 30 12"><rect x="0.5" y="0.5" width="9.5" height="3" fill="#fff" stroke="#a0a0a0" stroke-width="1" /><rect x="19.5" y="0.5" width="10" height="9.5" fill="#fff" stroke="#a0a0a0" stroke-width="1" /><path d="M19.5 2.5 H29.5" fill="none" stroke="#a0a0a0" stroke-width="1.6" /></svg>
<svg style="left:1442px;top:84px;" width="18" height="11" viewBox="0 0 18 11"><text x="0.4" y="8.8" font-family="Liberation Sans" font-size="10.5" fill="#1f3864" letter-spacing="-0.4">(x)=</text></svg>
<svg style="left:1493.8px;top:84.4px;" width="11" height="11" viewBox="0 0 11 11"><path d="M0 1.6 L1.6 0 L5.2 3.6 L8.8 0 L10.4 1.6 L6.8 5.2 L10.4 8.8 L8.8 10.4 L5.2 6.8 L1.6 10.4 L0 8.8 L3.6 5.2 Z" fill="none" stroke="#a4a4a4" stroke-width="0.9" stroke-linejoin="round"/></svg>
<svg style="left:1516.6px;top:83.6px;" width="15" height="13" viewBox="0 0 15 13"><circle cx="3.8" cy="3.8" r="3.2" fill="url(#gBall)" stroke="#2f5f8f" stroke-width="0.9"/><circle cx="10.6" cy="8.6" r="3.2" fill="url(#gBall)" stroke="#2f5f8f" stroke-width="0.9"/></svg>
<svg style="left:1588.6px;top:84px;" width="17" height="12" viewBox="0 0 17 12"><text x="0" y="5.6" font-family="Liberation Sans" font-size="6.8" fill="#4a5f7a" letter-spacing="-0.1">1010</text><text x="0" y="11.6" font-family="Liberation Sans" font-size="6.8" fill="#4a5f7a" letter-spacing="-0.1">0101</text></svg>
<svg style="left:1660px;top:83px;" width="18" height="14" viewBox="0 0 18 14"><circle cx="3.4" cy="6.4" r="2.6" fill="none" stroke="#35618f" stroke-width="1.3"/><circle cx="9.8" cy="6.6" r="2.6" fill="none" stroke="#35618f" stroke-width="1.3"/><path d="M6 6.2 Q6.6 5.2 7.2 6.2 M1.6 4.4 Q3 0.2 6 1 M11.6 4.6 Q13.4 0.2 16.4 2.4" fill="none" stroke="#35618f" stroke-width="1.2" /><text x="5.6" y="13.6" font-family="Liberation Sans" font-weight="bold" font-size="6.5" fill="#4a6f9a">x=</text></svg>
<svg style="left:1731.6px;top:84.6px;" width="17" height="11" viewBox="0 0 17 11"><rect x="0.2" y="0.6" width="3" height="1.9" fill="#2030b0" /><rect x="4.2" y="0.6" width="3" height="1.9" fill="#2030b0" /><rect x="8.2" y="0.6" width="3" height="1.9" fill="#2030b0" /><rect x="12.2" y="0.6" width="3" height="1.9" fill="#2030b0" /><rect x="15.4" y="0.6" width="0.9" height="1.9" fill="#2030b0" /><rect x="0.2" y="4.6" width="3" height="1.9" fill="#2030b0" /><rect x="4.2" y="4.6" width="3" height="1.9" fill="#2030b0" /><rect x="8.2" y="4.6" width="3" height="1.9" fill="#2030b0" /><rect x="12.6" y="4.6" width="1.6" height="1.9" fill="#2030b0" /><rect x="15" y="4.2" width="0.9" height="1.9" fill="#2030b0" /><rect x="0.2" y="8.6" width="11.6" height="2" fill="#2030b0" /></svg>
<svg style="left:1806.6px;top:82.6px;" width="15" height="15" viewBox="0 0 15 15"><rect x="0.7" y="0.7" width="8.2" height="5.4" fill="#dfe9f6" stroke="#4a6fb0" stroke-width="1.2" /><path d="M4.8 6.4 V8.8 M2.6 11 V8.8 H11.6 V11" fill="none" stroke="#4a6fb0" stroke-width="1.1" /><rect x="0.8" y="11" width="3.8" height="3.4" fill="#fbe58a" stroke="#c09a2a" stroke-width="1" /><rect x="9.6" y="11" width="3.8" height="3.4" fill="#fbe58a" stroke="#c09a2a" stroke-width="1" /></svg>
<svg style="left:1885.6px;top:81px;" width="30" height="12" viewBox="0 0 30 12"><rect x="0.5" y="0.5" width="9.5" height="3" fill="#fff" stroke="#a0a0a0" stroke-width="1" /><rect x="19.5" y="0.5" width="10" height="9.5" fill="#fff" stroke="#a0a0a0" stroke-width="1" /><path d="M19.5 2.5 H29.5" fill="none" stroke="#a0a0a0" stroke-width="1.6" /></svg>
<svg style="left:1797.6px;top:107.4px;" width="17" height="15" viewBox="0 0 17 15"><path d="M2.6 5.8 H15.2 V11 L12 14.2 H2.6 Z" fill="#fffdf4" stroke="#c8a858" stroke-width="1" /><path d="M12 14.2 V11 H15.2" fill="#f0d898" stroke="#c8a858" stroke-width="0.8" /><path d="M4.4 11.6 H5.6 M7 11.6 H8.2 M9.6 11.6 H10.8" fill="none" stroke="#3a62b8" stroke-width="1.4" /><text x="0.2" y="9.6" font-family="Liberation Serif" font-style="italic" font-weight="bold" font-size="13" fill="#2a4f98">x</text></svg>
<div style="left:1815.5px;top:105px;width:19.5px;height:18.4px;background:#c5ddf3;border:1px solid #b4d3f1;box-sizing:border-box;"></div>
<svg style="left:1818px;top:108px;" width="16" height="14" viewBox="0 0 16 14"><path d="M0.4 4.6 H4.6 V2.6 L8 5.8 L4.6 9 V7 H0.4 Z" fill="#fbd978" stroke="#c8962a" stroke-width="0.9" /><path d="M10.6 12.6 V2 M8.6 4 L10.6 1.4 L12.6 4 M10.6 6.6 H13 M10.6 11 H13" fill="none" stroke="#3a5fa8" stroke-width="1.1" /><rect x="13" y="5.2" width="2.6" height="2.6" fill="#f05050" stroke="#c03030" stroke-width="0.6" /><rect x="13" y="9.6" width="2.6" height="2.6" fill="#f05050" stroke="#c03030" stroke-width="0.6" /><path d="M13.4 2 H15.6" fill="none" stroke="#8fa8d8" stroke-width="0.8" /></svg>
<svg style="left:1839px;top:108.4px;" width="13" height="13" viewBox="0 0 13 13"><rect x="0.5" y="0.5" width="9" height="8.6" fill="#f2f2f2" stroke="#c4c4c4" stroke-width="1" /><rect x="2.6" y="3" width="9.8" height="9.4" fill="#f8f8f8" stroke="#b8b8b8" stroke-width="1" /><path d="M4.6 7.8 H10.4" fill="none" stroke="#a8a8a8" stroke-width="1.6" /></svg>
<div style="left:1856px;top:106px;width:1px;height:17px;background:#b4b4b4;"></div>
<svg style="left:1860.6px;top:106.6px;" width="16" height="15" viewBox="0 0 16 15"><rect x="0.6" y="2.6" width="13.4" height="11.4" fill="url(#gWin)" stroke="#8a7440" stroke-width="1" /><rect x="1.1" y="3.1" width="12.4" height="2.2" fill="#4f97dd" /><path d="M4 13.2 Q10 13 12.6 7" fill="none" stroke="#f3dc9a" stroke-width="1.4" /><path d="M11.8 0.2 L13.2 2.8 L15.8 4 L13.2 5.2 L11.8 7.8 L10.4 5.2 L7.8 4 L10.4 2.8 Z" fill="#fff4b8" stroke="#b58a26" stroke-width="0.9" /></svg>
<svg style="left:1882px;top:107.4px;" width="15" height="14" viewBox="0 0 15 14"><rect x="0.6" y="4" width="10.8" height="9.4" fill="#f2f2f2" stroke="#a8a8a8" stroke-width="1" /><path d="M1 5.8 H5" fill="none" stroke="#9a9a9a" stroke-width="1.6" /><path d="M7.4 7.4 L9.6 5" fill="none" stroke="#a8a8a8" stroke-width="1.1" /><path d="M9 3.6 L11.4 0.8 L13.8 3 L11.2 5.8 Z" fill="#e8e8e8" stroke="#a8a8a8" stroke-width="0.9" /></svg>
<svg style="left:1908px;top:106.6px;" width="7" height="18" viewBox="0 0 7 18"><circle cx="3.5" cy="2.8" r="2.3" fill="#fff" stroke="#3c3c3c" stroke-width="1"/><circle cx="3.5" cy="8.399999999999999" r="2.3" fill="#fff" stroke="#3c3c3c" stroke-width="1"/><circle cx="3.5" cy="14.0" r="2.3" fill="#fff" stroke="#3c3c3c" stroke-width="1"/></svg>
<svg style="left:539px;top:690.4px;" width="14" height="14" viewBox="0 0 14 14"><rect x="0.8" y="0.8" width="11.8" height="8.8" fill="#e8f0fb" stroke="#2f68b8" stroke-width="1.7" rx="0.8" /><rect x="3" y="3.4" width="3.6" height="1.6" fill="#9ab0d8" /><rect x="3" y="5" width="6" height="1.8" fill="#9ab0d8" /><rect x="2.4" y="10.6" width="8.6" height="1.6" fill="#2f68b8" /><rect x="1.4" y="12.2" width="10.6" height="1" fill="#8fb0e0" /></svg>
<svg style="left:618.8px;top:691.8px;" width="11" height="11" viewBox="0 0 11 11"><path d="M0 1.6 L1.6 0 L5.2 3.6 L8.8 0 L10.4 1.6 L6.8 5.2 L10.4 8.8 L8.8 10.4 L5.2 6.8 L1.6 10.4 L0 8.8 L3.6 5.2 Z" fill="none" stroke="#a4a4a4" stroke-width="0.9" stroke-linejoin="round"/></svg>
<svg style="left:644.6px;top:690px;" width="10" height="15" viewBox="0 0 10 15"><path d="M0.7 2.6 V12 Q0.7 13.8 4.7 13.8 Q8.7 13.8 8.7 12 V2.6" fill="#a9c4ec" stroke="#3a68b8" stroke-width="1.2" /><path d="M3 3.6 V13.2" fill="none" stroke="#e4eefc" stroke-width="1.8" /><ellipse cx="4.7" cy="2.6" rx="4" ry="1.9" fill="#c8dcf6" stroke="#3a68b8" stroke-width="1.1"/></svg>
<svg style="left:748px;top:690px;" width="15" height="15" viewBox="0 0 15 15"><circle cx="7.4" cy="7.4" r="7" fill="#6f8fd0" stroke="#4a68b0" stroke-width="0.8"/><circle cx="6.4" cy="6" r="4.6" fill="#8faae0"/><path d="M5.2 3.4 L11.2 7.4 L5.2 11.4 Z" fill="#fff" /></svg>
<svg style="left:875.6px;top:689.6px;" width="17" height="17" viewBox="0 0 17 17"><g transform="rotate(-42 8.5 8.5)"><path d="M0.4 6.4 Q0.4 5.4 1.4 5.4 H5 V11.8 H1.4 Q0.4 11.8 0.4 10.8 Z" fill="#fffdf0" stroke="#ead89a" stroke-width="0.8" /><rect x="5" y="5.2" width="3.6" height="6.8" fill="#a39c92" stroke="#7a746c" stroke-width="0.6" /><path d="M8.6 5 H14.2 L16.8 6.6 V10.4 L14.2 12 H8.6 Z" fill="#f2b63a" stroke="#b8801a" stroke-width="0.9" /><rect x="11.6" y="7.2" width="2.2" height="1.8" fill="#2a4a9a" /></g></svg>
<svg style="left:1721px;top:687px;" width="16" height="16" viewBox="0 0 16 16"><path d="M0.6 0.6 H7.6 L10.6 3.6 V12.8 H0.6 Z" fill="#fff" stroke="#c4b078" stroke-width="1" /><path d="M2.2 3.6 H6.4 M2.2 5.6 H8.6 M2.2 7.6 H8.6 M2.2 9.6 H8.6 M2.2 11.2 H6.6" fill="none" stroke="#5f86c8" stroke-width="0.9" /><path d="M8.6 9.4 L14.4 15 M14.4 9.4 L8.6 15" fill="none" stroke="#3c3c3c" stroke-width="2" /></svg>
<svg style="left:1741px;top:687px;" width="16" height="16" viewBox="0 0 16 16"><rect x="1.6" y="0.6" width="13.4" height="13" fill="#eef3fa" stroke="#3a62a8" stroke-width="1" /><path d="M10.6 0.6 V13.6" fill="none" stroke="#3a62a8" stroke-width="0.9" /><rect x="11.8" y="2" width="2" height="2" fill="#3a62a8" /><rect x="11.8" y="9.6" width="2" height="2" fill="#3a62a8" /><path d="M2.4 9 V7 Q2.4 4.6 4.4 4.6 Q6.4 4.6 6.4 7 V9" fill="none" stroke="#b8861a" stroke-width="1.3" /><rect x="0.6" y="8.6" width="7.6" height="6.4" fill="#f8c848" stroke="#b8861a" stroke-width="1" rx="0.8" /><rect x="3.6" y="10.6" width="1.6" height="2.4" fill="#8a5a0a" /></svg>
<svg style="left:1760px;top:687px;" width="16" height="16" viewBox="0 0 16 16"><rect x="0.6" y="0.6" width="11.4" height="13.4" fill="#fff" stroke="#d0c090" stroke-width="1" /><path d="M2 3 H9.6 M2 5.2 H7 M2 7.4 H9.6 M2 9.6 H6 M2 11.8 H8" fill="none" stroke="#8fa8d8" stroke-width="0.9" /><path d="M14 3.2 V7.6 Q14 9.6 12 9.6 H9.8 V7.6 L6 10.8 L9.8 14 V12 H12.4 Q15.8 12 15.8 8.4 V3.2 Z" fill="#fde2a0" stroke="#e0b868" stroke-width="0.9" /></svg>
<div style="left:1778px;top:687px;width:1px;height:17px;background:#b4b4b4;"></div>
<svg style="left:1784.6px;top:687px;" width="15" height="16" viewBox="0 0 15 16"><rect x="0.6" y="6" width="12.4" height="9.4" fill="#fff" stroke="#8a9ab8" stroke-width="1" /><rect x="1.1" y="6.5" width="11.4" height="2" fill="#3f7fd0" /><path d="M7 11 L9.6 8" fill="none" stroke="#2a3a78" stroke-width="1.2" /><path d="M8.6 5.4 L11.2 2 L14.4 4.2 L12 8 Z" fill="#3faa4a" stroke="#2a7a32" stroke-width="0.8" /><circle cx="12.8" cy="2.8" r="1.6" fill="#5fc86a"/></svg>
<svg style="left:1805px;top:688px;" width="14" height="14" viewBox="0 0 14 14"><rect x="0.9" y="0.9" width="11.6" height="9" fill="#f4f4f4" stroke="#8c8c8c" stroke-width="1.6" /><path d="M3.2 3.8 H8.6 M3.2 6.4 H10" fill="none" stroke="#8c8c8c" stroke-width="1.1" /><rect x="3.6" y="10.6" width="6" height="1.4" fill="#8c8c8c" /><rect x="1.6" y="12" width="10" height="1.2" fill="#b0b0b0" /></svg>
<svg style="left:1826.4px;top:693px;" width="9" height="5" viewBox="0 0 9 5"><path d="M0 0 H9 L4.5 4.6 Z" fill="#707070" /></svg>
<svg style="left:1843.6px;top:687.4px;" width="16" height="15" viewBox="0 0 16 15"><rect x="0.6" y="2.6" width="13.4" height="11.4" fill="url(#gWin)" stroke="#8a7440" stroke-width="1" /><rect x="1.1" y="3.1" width="12.4" height="2.2" fill="#4f97dd" /><path d="M4 13.2 Q10 13 12.6 7" fill="none" stroke="#f3dc9a" stroke-width="1.4" /><path d="M11.8 0.2 L13.2 2.8 L15.8 4 L13.2 5.2 L11.8 7.8 L10.4 5.2 L7.8 4 L10.4 2.8 Z" fill="#fff4b8" stroke="#b58a26" stroke-width="0.9" /></svg>
<svg style="left:1866px;top:693px;" width="9" height="5" viewBox="0 0 9 5"><path d="M0 0 H9 L4.5 4.6 Z" fill="#1a1a1a" /></svg>
<svg style="left:1885.6px;top:689.4px;" width="30" height="12" viewBox="0 0 30 12"><rect x="0.5" y="0.5" width="9.5" height="3" fill="#fff" stroke="#a0a0a0" stroke-width="1" /><rect x="19.5" y="0.5" width="10" height="9.5" fill="#fff" stroke="#a0a0a0" stroke-width="1" /><path d="M19.5 2.5 H29.5" fill="none" stroke="#a0a0a0" stroke-width="1.6" /></svg>
<svg style="left:1386px;top:1009px;" width="2" height="18" viewBox="0 0 2 18"><rect x="0.1" y="0.2" width="1.7" height="1.7" fill="#a0a0a0" /><rect x="0.1" y="4.3500000000000005" width="1.7" height="1.7" fill="#a0a0a0" /><rect x="0.1" y="8.5" width="1.7" height="1.7" fill="#a0a0a0" /><rect x="0.1" y="12.65" width="1.7" height="1.7" fill="#a0a0a0" /></svg>
<svg style="left:1551.6px;top:1010px;" width="13" height="13" viewBox="0 0 13 13"><path d="M4.4 1.6 V0.6 H8 V1.6" fill="none" stroke="#3a5a9a" stroke-width="1" /><rect x="0.4" y="1.8" width="12" height="1.8" fill="#3a5a9a" /><path d="M1.8 4.6 H10.8 L10.2 13 H2.4 Z" fill="#9ab4e0" stroke="#3a5a9a" stroke-width="1" /><path d="M4.4 6 V13 M6.3 6 V13 M8.2 6 V13" fill="none" stroke="#3a5a9a" stroke-width="0.9" /></svg>
<svg style="left:1569px;top:1009px;" width="2" height="18" viewBox="0 0 2 18"><rect x="0.1" y="0.2" width="1.7" height="1.7" fill="#a0a0a0" /><rect x="0.1" y="4.3500000000000005" width="1.7" height="1.7" fill="#a0a0a0" /><rect x="0.1" y="8.5" width="1.7" height="1.7" fill="#a0a0a0" /><rect x="0.1" y="12.65" width="1.7" height="1.7" fill="#a0a0a0" /></svg>
<span style="left:24.0px;top:5.0px;font-size:15px;transform:scaleX(0.9923);transform-origin:0 0;">v5_workspace2 - station_ping-brd2204a-gg11_2/station_ping/rsi_station_ping.c - Simplicity Studio™</span>
<span style="left:4.0px;top:31px;font-size:15px;transform:scaleX(0.9102);transform-origin:0 0;">File</span>
<span style="left:33.5px;top:31px;font-size:15px;transform:scaleX(0.9473);transform-origin:0 0;">Edit</span>
<span style="left:65.5px;top:31px;font-size:15px;transform:scaleX(0.9468);transform-origin:0 0;">Source</span>
<span style="left:118.0px;top:31px;font-size:15px;transform:scaleX(0.9612);transform-origin:0 0;">Refactor</span>
<span style="left:180.0px;top:31px;font-size:15px;transform:scaleX(0.9797);transform-origin:0 0;">Navigate</span>
<span style="left:245.5px;top:31px;font-size:15px;transform:scaleX(0.9152);transform-origin:0 0;">Search</span>
<span style="left:297.0px;top:31px;font-size:15px;transform:scaleX(0.9745);transform-origin:0 0;">Project</span>
<span style="left:350.0px;top:31px;font-size:15px;transform:scaleX(0.9263);transform-origin:0 0;">Run</span>
<span style="left:383.0px;top:31px;font-size:15px;letter-spacing:0.320px;">Window</span>
<span style="left:445.5px;top:31px;font-size:15px;transform:scaleX(0.9884);transform-origin:0 0;">Help</span>
<span style="left:695.0px;top:56px;font-size:15px;transform:scaleX(0.9960);transform-origin:0 0;">Welcome</span>
<span style="left:781.3px;top:56px;font-size:15px;transform:scaleX(0.9341);transform-origin:0 0;">Recent</span>
<span style="left:850.3px;top:56px;font-size:15px;transform:scaleX(0.9477);transform-origin:0 0;">Tools</span>
<span style="left:908.2px;top:56px;font-size:15px;transform:scaleX(0.9570);transform-origin:0 0;">Install</span>
<span style="left:970.3px;top:56px;font-size:15px;transform:scaleX(0.9484);transform-origin:0 0;">Preferences</span>
<span style="left:1592.5px;top:56px;font-size:15px;transform:scaleX(0.9479);transform-origin:0 0;">Launcher</span>
<span style="left:1676.0px;top:56px;font-size:15px;transform:scaleX(0.9642);transform-origin:0 0;">Simplicity IDE</span>
<span style="left:1858.2px;top:56px;font-size:15px;transform:scaleX(0.9377);transform-origin:0 0;">Resource</span>
<span style="left:1790.4px;top:56px;font-size:15px;transform:scaleX(0.9864);transform-origin:0 0;">Debug</span>
<span style="left:26.5px;top:81px;font-size:15px;transform:scaleX(0.9698);transform-origin:0 0;">Project Explorer</span>
<span style="left:557.2px;top:81px;font-size:15px;transform:scaleX(0.9577);transform-origin:0 0;">rsi_station_ping.c</span>
<span style="left:1463.0px;top:81px;font-size:15px;transform:scaleX(0.9128);transform-origin:0 0;">V...</span>
<span style="left:1536.5px;top:81px;font-size:15px;transform:scaleX(0.8127);transform-origin:0 0;">B...</span>
<span style="left:1609.4px;top:81px;font-size:15px;transform:scaleX(0.7624);transform-origin:0 0;">R...</span>
<span style="left:1681.0px;top:81px;font-size:15px;transform:scaleX(0.7683);transform-origin:0 0;">E...</span>
<span style="left:1752.2px;top:81px;font-size:15px;transform:scaleX(0.8738);transform-origin:0 0;">D...</span>
<span style="left:1827.0px;top:81px;font-size:15px;transform:scaleX(0.8649);transform-origin:0 0;">P...</span>
<span style="left:557.2px;top:689px;font-size:15px;transform:scaleX(0.9701);transform-origin:0 0;">Console</span>
<span style="left:661.8px;top:689px;font-size:15px;letter-spacing:0.206px;">Memory</span>
<span style="left:768.0px;top:689px;font-size:15px;transform:scaleX(0.9423);transform-origin:0 0;">Executables</span>
<span style="left:896.6px;top:689px;font-size:15px;transform:scaleX(0.9068);transform-origin:0 0;">Search</span>
<span style="left:536.6px;top:713.4px;font-size:15px;color:#444444;transform:scaleX(0.9674);transform-origin:0 0;">Adapter Pack Console</span>
<span style="left:45.3px;top:106px;font-size:15px;">station_ping-brd2204a-gg11_2</span>
<div style="left:250px;top:104px;width:277px;height:24px;overflow:hidden;">
<span style="left:4.7px;top:2px;font-size:15px;color:#957d47;transform:scaleX(0.9630);transform-origin:0 0;">[GNU ARM v10.2.1 - debug] [EFM32GG11</span>
</div>
<span style="left:65.6px;top:128.6px;font-size:15px;transform:scaleX(0.9736);transform-origin:0 0;">Includes</span>
<span style="left:65.6px;top:150.6px;font-size:15px;transform:scaleX(0.8881);transform-origin:0 0;">CMSIS</span>
<span style="left:65.6px;top:172.6px;font-size:15px;transform:scaleX(0.9389);transform-origin:0 0;">Drivers</span>
<span style="left:65.6px;top:194.6px;font-size:15px;letter-spacing:0.036px;">emlib</span>
<span style="left:65.6px;top:216.6px;font-size:15px;letter-spacing:0.188px;">platform</span>
<span style="left:65.6px;top:238.6px;font-size:15px;transform:scaleX(0.9372);transform-origin:0 0;">sapi</span>
<span style="left:65.6px;top:260.6px;font-size:15px;transform:scaleX(0.9888);transform-origin:0 0;">station_ping</span>
<span style="left:85.6px;top:282.6px;font-size:15px;transform:scaleX(0.9603);transform-origin:0 0;">rsi_station_ping.c</span>
<span style="left:85.6px;top:304.6px;font-size:15px;transform:scaleX(0.9534);transform-origin:0 0;">rsi_wlan_config.h</span>
<span style="left:65.6px;top:326.6px;font-size:15px;transform:scaleX(0.9933);transform-origin:0 0;">third_party</span>
<span style="left:65.6px;top:348.6px;font-size:15px;letter-spacing:0.087px;">imported_project_report.html</span>
<span style="left:890.4px;top:1009px;font-size:15px;letter-spacing:0.022px;">Writable</span>
<span style="left:1063.8px;top:1009px;font-size:15px;transform:scaleX(0.9671);transform-origin:0 0;">Smart Insert</span>
<span style="left:1229.0px;top:1009px;font-size:15px;transform:scaleX(0.9352);transform-origin:0 0;">1 : 1 : 0</span>
<span style="left:1415.0px;top:1009px;font-size:15px;letter-spacing:0.041px;">1105M of 1333M</span>
<span class="m" style="left:565.5px;top:106.6px;font-size:15px;color:#606060;-webkit-text-stroke:0;">1</span>
<span class="m" style="left:587.1px;top:106.6px;font-size:15px;color:#3f5fbf;">/</span>
<span class="m" style="left:594.82px;top:107.7px;font-size:19.5px;color:#3f5fbf;letter-spacing:-2.68px;-webkit-text-stroke:0;">*******************************************************************************</span>
<span class="m" style="left:565.5px;top:125.66px;font-size:15px;color:#606060;-webkit-text-stroke:0;">2</span>
<span class="m" style="left:585.8px;top:126.76px;font-size:19.5px;color:#3f5fbf;letter-spacing:-2.68px;-webkit-text-stroke:0;">*</span>
<span class="m" style="left:596.12px;top:125.66px;font-size:15px;color:#3f5fbf;"> </span>
<span class="m" style="left:605.14px;top:125.66px;font-size:15px;color:#7f9fbf;">@file</span>
<span class="m" style="left:650.25px;top:125.66px;font-size:15px;color:#3f5fbf;">  rsi_station_ping.c</span>
<span class="m" style="left:565.5px;top:144.72px;font-size:15px;color:#606060;-webkit-text-stroke:0;">3</span>
<span class="m" style="left:585.8px;top:145.82px;font-size:19.5px;color:#3f5fbf;letter-spacing:-2.68px;-webkit-text-stroke:0;">*</span>
<span class="m" style="left:596.12px;top:144.72px;font-size:15px;color:#3f5fbf;"> </span>
<span class="m" style="left:605.14px;top:144.72px;font-size:15px;color:#7f9fbf;">@brief</span>
<span class="m" style="left:565.5px;top:163.78px;font-size:15px;color:#606060;-webkit-text-stroke:0;">4</span>
<span class="m" style="left:585.8px;top:164.88px;font-size:19.5px;color:#3f5fbf;letter-spacing:-2.68px;-webkit-text-stroke:0;">*******************************************************************************</span>
<span class="m" style="left:565.5px;top:182.84px;font-size:15px;color:#606060;-webkit-text-stroke:0;">5</span>
<span class="m" style="left:585.8px;top:183.94px;font-size:19.5px;color:#3f5fbf;letter-spacing:-2.68px;-webkit-text-stroke:0;">*</span>
<span class="m" style="left:596.12px;top:182.84px;font-size:15px;color:#3f5fbf;"> # License</span>
<span class="m" style="left:565.5px;top:201.9px;font-size:15px;color:#606060;-webkit-text-stroke:0;">6</span>
<span class="m" style="left:585.8px;top:203.0px;font-size:19.5px;color:#3f5fbf;letter-spacing:-2.68px;-webkit-text-stroke:0;">*</span>
<span class="m" style="left:596.12px;top:201.9px;font-size:15px;color:#3f5fbf;"> &lt;b&gt;Copyright 2021 Silicon Laboratories Inc. www.silabs.com&lt;/b&gt;</span>
<span class="m" style="left:565.5px;top:220.96px;font-size:15px;color:#606060;-webkit-text-stroke:0;">7</span>
<span class="m" style="left:585.8px;top:222.06px;font-size:19.5px;color:#3f5fbf;letter-spacing:-2.68px;-webkit-text-stroke:0;">*******************************************************************************</span>
<span class="m" style="left:565.5px;top:240.02px;font-size:15px;color:#606060;-webkit-text-stroke:0;">8</span>
<span class="m" style="left:585.8px;top:241.12px;font-size:19.5px;color:#3f5fbf;letter-spacing:-2.68px;-webkit-text-stroke:0;">*</span>
<span class="m" style="left:565.5px;top:259.08px;font-size:15px;color:#606060;-webkit-text-stroke:0;">9</span>
<span class="m" style="left:585.8px;top:260.18px;font-size:19.5px;color:#3f5fbf;letter-spacing:-2.68px;-webkit-text-stroke:0;">*</span>
<span class="m" style="left:596.12px;top:259.08px;font-size:15px;color:#3f5fbf;"> The licensor of this software is Silicon Laboratories Inc. Your use of this</span>
<span class="m" style="left:556.5px;top:278.14px;font-size:15px;color:#606060;-webkit-text-stroke:0;">10</span>
<span class="m" style="left:585.8px;top:279.24px;font-size:19.5px;color:#3f5fbf;letter-spacing:-2.68px;-webkit-text-stroke:0;">*</span>
<span class="m" style="left:596.12px;top:278.14px;font-size:15px;color:#3f5fbf;"> software is governed by the terms of Silicon Labs Master Software License</span>
<span class="m" style="left:556.5px;top:297.2px;font-size:15px;color:#606060;-webkit-text-stroke:0;">11</span>
<span class="m" style="left:585.8px;top:298.3px;font-size:19.5px;color:#3f5fbf;letter-spacing:-2.68px;-webkit-text-stroke:0;">*</span>
<span class="m" style="left:596.12px;top:297.2px;font-size:15px;color:#3f5fbf;"> Agreement (MSLA) available at</span>
<span class="m" style="left:556.5px;top:316.26px;font-size:15px;color:#606060;-webkit-text-stroke:0;">12</span>
<span class="m" style="left:585.8px;top:317.36px;font-size:19.5px;color:#3f5fbf;letter-spacing:-2.68px;-webkit-text-stroke:0;">*</span>
<span class="m" style="left:596.12px;top:316.26px;font-size:15px;color:#3f5fbf;"> www.silabs.com/about-us/legal/master-software-license-agreement. This</span>
<span class="m" style="left:556.5px;top:335.32px;font-size:15px;color:#606060;-webkit-text-stroke:0;">13</span>
<span class="m" style="left:585.8px;top:336.42px;font-size:19.5px;color:#3f5fbf;letter-spacing:-2.68px;-webkit-text-stroke:0;">*</span>
<span class="m" style="left:596.12px;top:335.32px;font-size:15px;color:#3f5fbf;"> software is distributed to you in Source Code format and is governed by the</span>
<span class="m" style="left:556.5px;top:354.38px;font-size:15px;color:#606060;-webkit-text-stroke:0;">14</span>
<span class="m" style="left:585.8px;top:355.48px;font-size:19.5px;color:#3f5fbf;letter-spacing:-2.68px;-webkit-text-stroke:0;">*</span>
<span class="m" style="left:596.12px;top:354.38px;font-size:15px;color:#3f5fbf;"> sections of the MSLA applicable to Source Code.</span>
<span class="m" style="left:556.5px;top:373.44px;font-size:15px;color:#606060;-webkit-text-stroke:0;">15</span>
<span class="m" style="left:585.8px;top:374.54px;font-size:19.5px;color:#3f5fbf;letter-spacing:-2.68px;-webkit-text-stroke:0;">*</span>
<span class="m" style="left:556.5px;top:392.5px;font-size:15px;color:#606060;-webkit-text-stroke:0;">16</span>
<span class="m" style="left:585.8px;top:393.6px;font-size:19.5px;color:#3f5fbf;letter-spacing:-2.68px;-webkit-text-stroke:0;">******************************************************************************</span>
<span class="m" style="left:1290.78px;top:392.5px;font-size:15px;color:#3f5fbf;">/</span>
<span class="m" style="left:556.5px;top:411.56px;font-size:15px;color:#606060;-webkit-text-stroke:0;">17</span>
<span class="m" style="left:587.1px;top:411.56px;font-size:15px;color:#3f5fbf;">/</span>
<span class="m" style="left:594.82px;top:412.66px;font-size:19.5px;color:#3f5fbf;letter-spacing:-2.68px;-webkit-text-stroke:0;">*************************************************************************</span>
<span class="m" style="left:556.5px;top:430.62px;font-size:15px;color:#606060;-webkit-text-stroke:0;">18</span>
<span class="m" style="left:587.1px;top:430.62px;font-size:15px;color:#3f5fbf;"> </span>
<span class="m" style="left:594.82px;top:431.72px;font-size:19.5px;color:#3f5fbf;letter-spacing:-2.68px;-webkit-text-stroke:0;">*</span>
<span class="m" style="left:556.5px;top:449.68px;font-size:15px;color:#606060;-webkit-text-stroke:0;">19</span>
<span class="m" style="left:587.1px;top:449.68px;font-size:15px;color:#3f5fbf;"> </span>
<span class="m" style="left:594.82px;top:450.78px;font-size:19.5px;color:#3f5fbf;letter-spacing:-2.68px;-webkit-text-stroke:0;">*</span>
<span class="m" style="left:605.14px;top:449.68px;font-size:15px;color:#3f5fbf;">/</span>
<span class="m" style="left:556.5px;top:468.74px;font-size:15px;color:#606060;-webkit-text-stroke:0;">20</span>
<span class="m" style="left:556.5px;top:487.8px;font-size:15px;color:#606060;-webkit-text-stroke:0;">21</span>
<span class="m" style="left:587.1px;top:487.8px;font-size:15px;color:#3f7f5f;">/</span>
<span class="m" style="left:594.82px;top:488.9px;font-size:19.5px;color:#3f7f5f;letter-spacing:-2.68px;-webkit-text-stroke:0;">*</span>
<span class="m" style="left:605.14px;top:487.8px;font-size:15px;color:#3f7f5f;">================================================================================</span>
<span class="m" style="left:556.5px;top:506.86px;font-size:15px;color:#606060;-webkit-text-stroke:0;">22</span>
<span class="m" style="left:587.1px;top:506.86px;font-size:15px;color:#3f7f5f;"> </span>
<span class="m" style="left:594.82px;top:507.96px;font-size:19.5px;color:#3f7f5f;letter-spacing:-2.68px;-webkit-text-stroke:0;">*</span>
<span class="m" style="left:605.14px;top:506.86px;font-size:15px;color:#3f7f5f;"> @brief : This file contains example application for Station Ping</span>
<span class="m" style="left:556.5px;top:525.92px;font-size:15px;color:#606060;-webkit-text-stroke:0;">23</span>
<span class="m" style="left:587.1px;top:525.92px;font-size:15px;color:#3f7f5f;"> </span>
<span class="m" style="left:594.82px;top:527.02px;font-size:19.5px;color:#3f7f5f;letter-spacing:-2.68px;-webkit-text-stroke:0;">*</span>
<span class="m" style="left:605.14px;top:525.92px;font-size:15px;color:#3f7f5f;"> @section Description :</span>
<span class="m" style="left:556.5px;top:544.98px;font-size:15px;color:#606060;-webkit-text-stroke:0;">24</span>
<span class="m" style="left:587.1px;top:544.98px;font-size:15px;color:#3f7f5f;"> </span>
<span class="m" style="left:594.82px;top:546.08px;font-size:19.5px;color:#3f7f5f;letter-spacing:-2.68px;-webkit-text-stroke:0;">*</span>
<span class="m" style="left:605.14px;top:544.98px;font-size:15px;color:#3f7f5f;"> The application demonstrates how to configure SiLabs device in client mode to</span>
<span class="m" style="left:556.5px;top:564.04px;font-size:15px;color:#606060;-webkit-text-stroke:0;">25</span>
<span class="m" style="left:587.1px;top:564.04px;font-size:15px;color:#3f7f5f;"> </span>
<span class="m" style="left:594.82px;top:565.14px;font-size:19.5px;color:#3f7f5f;letter-spacing:-2.68px;-webkit-text-stroke:0;">*</span>
<span class="m" style="left:605.14px;top:564.04px;font-size:15px;color:#3f7f5f;"> send ping request to target IP address.</span>
<span class="m" style="left:556.5px;top:583.1px;font-size:15px;color:#606060;-webkit-text-stroke:0;">26</span>
<span class="m" style="left:587.1px;top:583.1px;font-size:15px;color:#3f7f5f;"> =================================================================================</span>
<span class="m" style="left:1325.56px;top:584.2px;font-size:19.5px;color:#3f7f5f;letter-spacing:-2.68px;-webkit-text-stroke:0;">*</span>
<span class="m" style="left:1335.88px;top:583.1px;font-size:15px;color:#3f7f5f;">/</span>
<span class="m" style="left:556.5px;top:602.16px;font-size:15px;color:#606060;-webkit-text-stroke:0;">27</span>
<span class="m" style="left:556.5px;top:621.22px;font-size:15px;color:#606060;-webkit-text-stroke:0;">28</span>
<span class="m" style="left:587.1px;top:621.22px;font-size:15px;color:#3f5fbf;">/</span>
<span class="m" style="left:594.82px;top:622.32px;font-size:19.5px;color:#3f5fbf;letter-spacing:-2.68px;-webkit-text-stroke:0;">**</span>
<span class="m" style="left:556.5px;top:640.28px;font-size:15px;color:#606060;-webkit-text-stroke:0;">29</span>
<span class="m" style="left:587.1px;top:640.28px;font-size:15px;color:#3f5fbf;"> </span>
<span class="m" style="left:594.82px;top:641.38px;font-size:19.5px;color:#3f5fbf;letter-spacing:-2.68px;-webkit-text-stroke:0;">*</span>
<span class="m" style="left:605.14px;top:640.28px;font-size:15px;color:#3f5fbf;"> Include files</span>
<svg style="left:575px;top:108.39999999999999px;" width="10" height="10" viewBox="0 0 10 10"><circle cx="4.7" cy="4.7" r="4.1" fill="#f4f7fb" stroke="#9aa4b4" stroke-width="1"/><path d="M2.4 4.7 H7" fill="none" stroke="#6a7484" stroke-width="1.1" /></svg>
<svg style="left:575px;top:413.36px;" width="10" height="10" viewBox="0 0 10 10"><circle cx="4.7" cy="4.7" r="4.1" fill="#f4f7fb" stroke="#9aa4b4" stroke-width="1"/><path d="M2.4 4.7 H7" fill="none" stroke="#6a7484" stroke-width="1.1" /></svg>
<svg style="left:575px;top:489.6px;" width="10" height="10" viewBox="0 0 10 10"><circle cx="4.7" cy="4.7" r="4.1" fill="#f4f7fb" stroke="#9aa4b4" stroke-width="1"/><path d="M2.4 4.7 H7" fill="none" stroke="#6a7484" stroke-width="1.1" /></svg>
<svg style="left:575px;top:623.02px;" width="10" height="10" viewBox="0 0 10 10"><circle cx="4.7" cy="4.7" r="4.1" fill="#f4f7fb" stroke="#9aa4b4" stroke-width="1"/><path d="M2.4 4.7 H7" fill="none" stroke="#6a7484" stroke-width="1.1" /></svg>
<svg style="left:642px;top:273.28px;" width="72" height="3" viewBox="0 0 72 3"><path d="M0 2 l2 -2 l2 2 l2 -2 l2 2 l2 -2 l2 2 l2 -2 l2 2 l2 -2 l2 2 l2 -2 l2 2 l2 -2 l2 2 l2 -2 l2 2 l2 -2 l2 2 l2 -2 l2 2 l2 -2 l2 2 l2 -2 l2 2 l2 -2 l2 2 l2 -2 l2 2 l2 -2 l2 2 l2 -2 l2 2 l2 -2 l2 2 l2 -2 l2 2" fill="none" stroke="#f0a080" stroke-width="0.8"/></svg>
<div style="left:534px;top:735px;width:1366px;height:60px;overflow:hidden;">
<span class="m" style="left:3.6px;top:0.8px;font-size:15px;-webkit-text-stroke:0.08px;">C:\SiliconLabs\SimplicityStudio\v5\developer\adapter_packs\usb\usb_monitor.exe C:\SiliconLabs\SimplicityStudio\v5\developer\adapter_packs\usb\usb_monitor.exe --list</span>
<span class="m" style="left:3.6px;top:19.8px;font-size:15px;-webkit-text-stroke:0.08px;">list: 0c45:6723@004:012[5&amp;32184FCD&amp;0&amp;12] 27c6:5395@004:007[HTK32] 8087:0029@004:004[5&amp;32184FCD&amp;0&amp;4]</span>
</div>
</body></html>
